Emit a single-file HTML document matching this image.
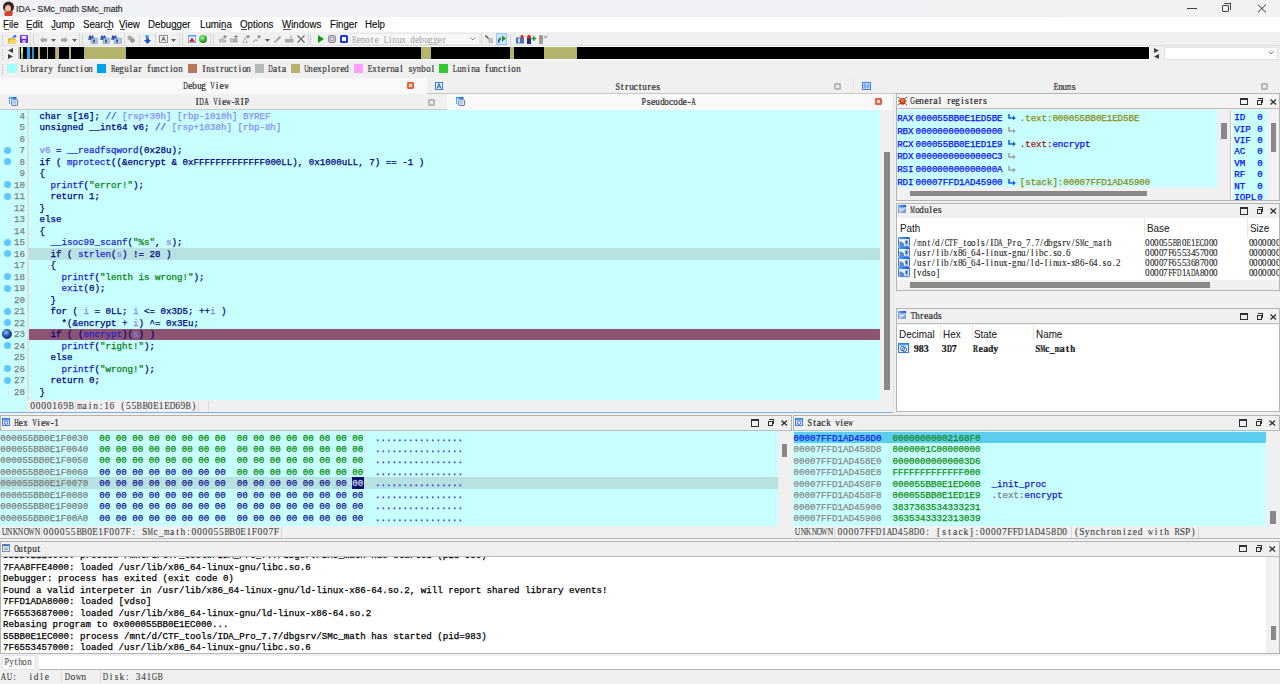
<!DOCTYPE html><html><head><meta charset="utf-8"><style>
*{margin:0;padding:0;box-sizing:border-box}
html,body{width:1280px;height:684px;overflow:hidden;background:#f0f0f0;position:relative}
.a{position:absolute}
.t{position:absolute;white-space:pre;line-height:1}
svg{position:absolute;overflow:visible}
.c{font-family:'Liberation Mono',monospace;-webkit-text-stroke:0.25px currentColor}
.s{font-family:'Liberation Mono',monospace;-webkit-text-stroke:0.2px currentColor}
</style></head><body><div class="a" style="left:0px;top:0px;width:1280px;height:17px;background:linear-gradient(90deg,#eff1f5 0px,#f0f1f4 900px,#f2f2f2 1100px);"></div><svg style="left:2px;top:1px" width="13" height="15" viewBox="0 0 13 15"><ellipse cx="6.5" cy="6" rx="5.5" ry="5.5" fill="#3a2520"/><ellipse cx="6" cy="7.5" rx="3" ry="3.5" fill="#e8c0a8"/><path d="M2 12L6 10L11 11L10 15H3Z" fill="#d84030"/></svg><div class="t" style="left:15.5px;top:4.36px;font-family:'Liberation Sans', sans-serif;font-size:9.5px;color:#282828;-webkit-text-stroke:0.15px #282828;transform:scaleX(0.91);transform-origin:0 0;">IDA - SMc_math SMc_math</div><div class="a" style="left:1187px;top:8px;width:10px;height:1px;background:#404040;"></div><div class="a" style="left:1222px;top:5px;width:7px;height:7px;background:transparent;border:1px solid #404040;border-radius:1px"></div><div class="a" style="left:1224px;top:3px;width:7px;height:7px;background:transparent;border-top:1px solid #404040;border-right:1px solid #404040;border-radius:1px"></div><svg style="left:1257px;top:4px" width="10" height="9" viewBox="0 0 10 9"><path d="M0.8 0.5L9 8.5M9 0.5L0.8 8.5" stroke="#303030" stroke-width="1"/></svg><div class="a" style="left:0px;top:17px;width:1280px;height:15px;background:#ffffff;"></div><div class="t" style="left:3.2046px;top:19.53px;font-family:'Liberation Sans', sans-serif;font-size:10px;color:#101010;-webkit-text-stroke:0.15px #101010;transform:scaleX(0.97);transform-origin:0 0;">File</div><div class="t" style="left:26.104599999999998px;top:19.53px;font-family:'Liberation Sans', sans-serif;font-size:10px;color:#101010;-webkit-text-stroke:0.15px #101010;transform:scaleX(0.97);transform-origin:0 0;">Edit</div><div class="t" style="left:51.4448px;top:19.53px;font-family:'Liberation Sans', sans-serif;font-size:10px;color:#101010;-webkit-text-stroke:0.15px #101010;transform:scaleX(0.97);transform-origin:0 0;">Jump</div><div class="t" style="left:83.1635px;top:19.53px;font-family:'Liberation Sans', sans-serif;font-size:10px;color:#101010;-webkit-text-stroke:0.15px #101010;transform:scaleX(0.97);transform-origin:0 0;">Search</div><div class="t" style="left:119.4612px;top:19.53px;font-family:'Liberation Sans', sans-serif;font-size:10px;color:#101010;-webkit-text-stroke:0.15px #101010;transform:scaleX(0.97);transform-origin:0 0;">View</div><div class="t" style="left:147.6046px;top:19.53px;font-family:'Liberation Sans', sans-serif;font-size:10px;color:#101010;-webkit-text-stroke:0.15px #101010;transform:scaleX(0.97);transform-origin:0 0;">Debugger</div><div class="t" style="left:199.8046px;top:19.53px;font-family:'Liberation Sans', sans-serif;font-size:10px;color:#101010;-webkit-text-stroke:0.15px #101010;transform:scaleX(0.97);transform-origin:0 0;">Lumina</div><div class="t" style="left:239.5441px;top:19.53px;font-family:'Liberation Sans', sans-serif;font-size:10px;color:#101010;-webkit-text-stroke:0.15px #101010;transform:scaleX(0.97);transform-origin:0 0;">Options</div><div class="t" style="left:282.1612px;top:19.53px;font-family:'Liberation Sans', sans-serif;font-size:10px;color:#101010;-webkit-text-stroke:0.15px #101010;transform:scaleX(0.97);transform-origin:0 0;">Windows</div><div class="t" style="left:329.50460000000004px;top:19.53px;font-family:'Liberation Sans', sans-serif;font-size:10px;color:#101010;-webkit-text-stroke:0.15px #101010;transform:scaleX(0.97);transform-origin:0 0;">Finger</div><div class="t" style="left:365.00460000000004px;top:19.53px;font-family:'Liberation Sans', sans-serif;font-size:10px;color:#101010;-webkit-text-stroke:0.15px #101010;transform:scaleX(0.97);transform-origin:0 0;">Help</div><div class="a" style="left:4.2px;top:28.8px;width:4.5px;height:0.8px;background:#505050;"></div><div class="a" style="left:27.3px;top:28.8px;width:5px;height:0.8px;background:#505050;"></div><div class="a" style="left:52px;top:28.8px;width:4px;height:0.8px;background:#505050;"></div><div class="a" style="left:106.5px;top:28.8px;width:5px;height:0.8px;background:#505050;"></div><div class="a" style="left:119.8px;top:28.8px;width:5.5px;height:0.8px;background:#505050;"></div><div class="a" style="left:175px;top:28.8px;width:5px;height:0.8px;background:#505050;"></div><div class="a" style="left:221px;top:28.8px;width:5px;height:0.8px;background:#505050;"></div><div class="a" style="left:240.5px;top:28.8px;width:6.5px;height:0.8px;background:#505050;"></div><div class="a" style="left:282.5px;top:28.8px;width:8px;height:0.8px;background:#505050;"></div><div class="a" style="left:0px;top:32px;width:1280px;height:14px;background:#f0f0f0;border-bottom:1px solid #dedede"></div><div class="a" style="left:2px;top:35px;width:1px;height:1px;background:#b8b8b8;"></div><div class="a" style="left:2px;top:37px;width:1px;height:1px;background:#b8b8b8;"></div><div class="a" style="left:2px;top:39px;width:1px;height:1px;background:#b8b8b8;"></div><div class="a" style="left:2px;top:41px;width:1px;height:1px;background:#b8b8b8;"></div><div class="a" style="left:2px;top:43px;width:1px;height:1px;background:#b8b8b8;"></div><svg style="left:8px;top:34.5px" width="9" height="9" viewBox="0 0 9 9"><path d="M0 3H3.2L4 4H8V8.5H0Z" fill="#e8b820"/><path d="M0.5 8.5L1.8 5H9L7.8 8.5Z" fill="#f8d860"/><path d="M4.5 3.2L7.6 0.6M7.6 0.6L5.8 0.6M7.6 0.6V2.4" stroke="#2068e0" stroke-width="1.2" fill="none"/></svg><svg style="left:20px;top:34.5px" width="8" height="8" viewBox="0 0 8 8"><rect x="0" y="0" width="8" height="8" rx="0.8" fill="#7028d0"/><rect x="1.6" y="0.8" width="4.8" height="3" fill="#f0e8ff"/><rect x="2.4" y="5" width="3.2" height="3" fill="#c8b8f0"/></svg><div class="a" style="left:30px;top:33px;width:1px;height:12px;background:#dadada;"></div><div class="a" style="left:33px;top:35px;width:1px;height:1px;background:#b8b8b8;"></div><div class="a" style="left:33px;top:37px;width:1px;height:1px;background:#b8b8b8;"></div><div class="a" style="left:33px;top:39px;width:1px;height:1px;background:#b8b8b8;"></div><div class="a" style="left:33px;top:41px;width:1px;height:1px;background:#b8b8b8;"></div><div class="a" style="left:33px;top:43px;width:1px;height:1px;background:#b8b8b8;"></div><svg style="left:40px;top:36.5px" width="7" height="6" viewBox="0 0 7 6"><path d="M0 3L3.2 0V1.6H7V4.4H3.2V6Z" fill="#a4a4a4"/></svg><svg style="left:51px;top:39px" width="5" height="3" viewBox="0 0 5 3"><path d="M0 0H5L2.5 3Z" fill="#606060"/></svg><svg style="left:61px;top:36.5px" width="7" height="6" viewBox="0 0 7 6"><path d="M7 3L3.8 0V1.6H0V4.4H3.8V6Z" fill="#a4a4a4"/></svg><svg style="left:72px;top:39px" width="5" height="3" viewBox="0 0 5 3"><path d="M0 0H5L2.5 3Z" fill="#606060"/></svg><div class="a" style="left:79px;top:33px;width:1px;height:12px;background:#dadada;"></div><div class="a" style="left:82px;top:35px;width:1px;height:1px;background:#b8b8b8;"></div><div class="a" style="left:82px;top:37px;width:1px;height:1px;background:#b8b8b8;"></div><div class="a" style="left:82px;top:39px;width:1px;height:1px;background:#b8b8b8;"></div><div class="a" style="left:82px;top:41px;width:1px;height:1px;background:#b8b8b8;"></div><div class="a" style="left:82px;top:43px;width:1px;height:1px;background:#b8b8b8;"></div><svg style="left:88px;top:34.8px" width="10" height="9" viewBox="0 0 10 9"><path d="M0.3 4.6L1.2 0.4H2.6L2.9 1.8H3.5L3.8 0.4H5.2L6 4.6V5.1H0.3Z" fill="#2444b8"/><circle cx="1.2" cy="4" r="0.7" fill="#60b0ff"/><rect x="3.2" y="3.3" width="6" height="5" fill="#b8cce4" stroke="#7090c0" stroke-width="0.7"/><rect x="5" y="4.5" width="2" height="3" fill="#3060a0"/></svg><svg style="left:100px;top:34.8px" width="10" height="9" viewBox="0 0 10 9"><path d="M0.3 4.6L1.2 0.4H2.6L2.9 1.8H3.5L3.8 0.4H5.2L6 4.6V5.1H0.3Z" fill="#2444b8"/><circle cx="1.2" cy="4" r="0.7" fill="#60b0ff"/><rect x="3.2" y="3.3" width="6" height="5" fill="#b8cce4" stroke="#7090c0" stroke-width="0.7"/><rect x="5" y="4.5" width="2" height="3" fill="#3060a0"/></svg><svg style="left:111.2px;top:34.8px" width="10" height="9" viewBox="0 0 10 9"><path d="M0.3 4.6L1.2 0.4H2.6L2.9 1.8H3.5L3.8 0.4H5.2L6 4.6V5.1H0.3Z" fill="#2444b8"/><circle cx="1.2" cy="4" r="0.7" fill="#60b0ff"/><rect x="3.2" y="3.3" width="7" height="5" fill="#b8cce4" stroke="#7090c0" stroke-width="0.7"/><rect x="5" y="4.5" width="2" height="3" fill="#3060a0"/></svg><div class="a" style="left:124px;top:33px;width:1px;height:12px;background:#dadada;"></div><svg style="left:127px;top:35px" width="8" height="8" viewBox="0 0 8 8"><circle cx="2.8" cy="2.8" r="2.4" fill="#a8a8a8"/><circle cx="5.4" cy="5.4" r="2.4" fill="#989898"/></svg><div class="a" style="left:139px;top:33px;width:1px;height:12px;background:#dadada;"></div><svg style="left:144px;top:34.5px" width="7" height="9" viewBox="0 0 7 9"><path d="M1.5 0H3.3Q5 0 5 2.2V5H7L3.6 9L0 5H2.2V2Q2.2 1.5 1.5 1.5Z" fill="#1050e8"/><path d="M1.5 0H3.3Q5 0 5 2.2V3.5H3V2Q3 1 1.5 1Z" fill="#40c0ff"/></svg><div class="a" style="left:155px;top:33px;width:1px;height:12px;background:#dadada;"></div><svg style="left:159px;top:35px" width="9" height="8" viewBox="0 0 9 8"><rect x="0.5" y="0.5" width="8" height="7" fill="#f4f4f4" stroke="#909090"/><path d="M2.5 6.2L4.5 1.8L6.5 6.2M3.3 4.6H5.7" stroke="#505050" fill="none" stroke-width="0.9"/></svg><svg style="left:171px;top:39px" width="5" height="3" viewBox="0 0 5 3"><path d="M0 0H5L2.5 3Z" fill="#606060"/></svg><div class="a" style="left:179px;top:33px;width:1px;height:12px;background:#dadada;"></div><div class="a" style="left:182px;top:35px;width:1px;height:1px;background:#b8b8b8;"></div><div class="a" style="left:182px;top:37px;width:1px;height:1px;background:#b8b8b8;"></div><div class="a" style="left:182px;top:39px;width:1px;height:1px;background:#b8b8b8;"></div><div class="a" style="left:182px;top:41px;width:1px;height:1px;background:#b8b8b8;"></div><div class="a" style="left:182px;top:43px;width:1px;height:1px;background:#b8b8b8;"></div><svg style="left:188px;top:35px" width="8" height="8" viewBox="0 0 8 8"><rect x="0" y="0" width="8" height="8" fill="#5aa0f0"/><rect x="0.8" y="1.6" width="6.4" height="5.6" fill="#f4f8ff"/><path d="M4 2.4L7 6.8H1Z" fill="#e01818"/></svg><svg style="left:199px;top:34.5px" width="8" height="8" viewBox="0 0 8 8"><defs><radialGradient id="gball" cx="0.4" cy="0.35" r="0.6"><stop offset="0" stop-color="#a0ffa0"/><stop offset="1" stop-color="#109010"/></radialGradient></defs><circle cx="4" cy="4" r="3.9" fill="url(#gball)"/></svg><div class="a" style="left:210px;top:33px;width:1px;height:12px;background:#dadada;"></div><div class="a" style="left:213px;top:35px;width:1px;height:1px;background:#b8b8b8;"></div><div class="a" style="left:213px;top:37px;width:1px;height:1px;background:#b8b8b8;"></div><div class="a" style="left:213px;top:39px;width:1px;height:1px;background:#b8b8b8;"></div><div class="a" style="left:213px;top:41px;width:1px;height:1px;background:#b8b8b8;"></div><div class="a" style="left:213px;top:43px;width:1px;height:1px;background:#b8b8b8;"></div><svg style="left:219px;top:35px" width="9" height="8" viewBox="0 0 9 8"><path d="M0.5 7.5V4H2V7.5M2.8 7.5V3H4.3V7.5M5 7.5V5H7V7.5" fill="#b8b8b8" stroke="#b0b0b0" stroke-width="0.5"/><path d="M6 0V3.4M4.3 1.7H7.7" stroke="#8a8a8a" stroke-width="1.3"/></svg><svg style="left:230px;top:35px" width="9" height="8" viewBox="0 0 9 8"><rect x="0" y="3.5" width="7.5" height="4" fill="#a8a8a8"/><rect x="1" y="4.5" width="2" height="2" fill="#d8d8d8"/><path d="M6 0V3.4M4.3 1.7H7.7" stroke="#8a8a8a" stroke-width="1.3"/></svg><svg style="left:241.6px;top:35px" width="9" height="8" viewBox="0 0 9 8"><path d="M0.5 7.5L3 2.5L5.5 7.5Z" fill="none" stroke="#b8b8b8" stroke-width="1"/><path d="M6 0V3.4M4.3 1.7H7.7" stroke="#8a8a8a" stroke-width="1.3"/></svg><svg style="left:253.4px;top:35px" width="9" height="8" viewBox="0 0 9 8"><path d="M0 7L3 4.5L4.5 6" stroke="#b0b0b0" stroke-width="1.2" fill="none"/><path d="M6 0V3.4M4.3 1.7H7.7" stroke="#8a8a8a" stroke-width="1.3"/></svg><svg style="left:265px;top:39px" width="5" height="3" viewBox="0 0 5 3"><path d="M0 0H5L2.5 3Z" fill="#606060"/></svg><svg style="left:273.7px;top:35px" width="9" height="8" viewBox="0 0 9 8"><path d="M0.5 7.5L6.5 1.5" stroke="#a8a8a8" stroke-width="2.2"/><path d="M1 5L3 7" stroke="#c8c8c8" stroke-width="0.8"/></svg><svg style="left:285px;top:35px" width="9" height="8" viewBox="0 0 9 8"><rect x="0" y="4" width="8.5" height="3.5" fill="#a8a8a8"/><path d="M6 4V0.5" stroke="#a8a8a8" stroke-width="1.2"/></svg><svg style="left:297px;top:35px" width="8" height="8" viewBox="0 0 8 8"><path d="M0.5 0.5L7.5 7.5M7.5 0.5L0.5 7.5" stroke="#6a6a6a" stroke-width="1.1"/></svg><div class="a" style="left:307.7px;top:33px;width:1px;height:12px;background:#dadada;"></div><div class="a" style="left:310px;top:35px;width:1px;height:1px;background:#b8b8b8;"></div><div class="a" style="left:310px;top:37px;width:1px;height:1px;background:#b8b8b8;"></div><div class="a" style="left:310px;top:39px;width:1px;height:1px;background:#b8b8b8;"></div><div class="a" style="left:310px;top:41px;width:1px;height:1px;background:#b8b8b8;"></div><div class="a" style="left:310px;top:43px;width:1px;height:1px;background:#b8b8b8;"></div><svg style="left:318px;top:35px" width="6" height="8" viewBox="0 0 6 8"><path d="M0 0L6 4L0 8Z" fill="#109a10"/></svg><svg style="left:328px;top:35px" width="8" height="8" viewBox="0 0 8 8"><rect x="0.5" y="0.5" width="7" height="7" rx="1.5" fill="#c8c8c8" stroke="#909090"/><rect x="2.5" y="2.5" width="3" height="3" fill="#e0e0e0" stroke="#909090" stroke-width="0.6"/></svg><svg style="left:340px;top:35px" width="8" height="8" viewBox="0 0 8 8"><rect x="0" y="0" width="8" height="8" rx="1.5" fill="#1838d8"/><rect x="2" y="2" width="4" height="4" fill="#ffffff"/></svg><div class="a" style="left:350px;top:33px;width:130px;height:12px;background:#f7f7f7;border:1px solid #e8e8e8"></div><div class="t" style="left:352px;top:34.62px;font-family:'Liberation Serif',serif;font-size:10px;color:#a0a0a0;-webkit-text-stroke:0.22px #a0a0a0;-webkit-text-stroke:0"><span style="position:absolute;left:-1.08px;top:0;transform:scaleX(0.675);transform-origin:3.33px 0">R</span><span style="position:absolute;left:4.53px;top:0;transform:scaleX(1.000);transform-origin:2.22px 0">e</span><span style="position:absolute;left:7.36px;top:0;transform:scaleX(0.579);transform-origin:3.89px 0">m</span><span style="position:absolute;left:13.25px;top:0;transform:scaleX(0.900);transform-origin:2.50px 0">o</span><span style="position:absolute;left:18.86px;top:0;transform:scaleX(1.000);transform-origin:1.39px 0">t</span><span style="position:absolute;left:22.53px;top:0;transform:scaleX(1.000);transform-origin:2.22px 0">e</span><span style="position:absolute;left:30.70px;top:0;transform:scaleX(0.737);transform-origin:3.05px 0">L</span><span style="position:absolute;left:36.86px;top:0;transform:scaleX(1.000);transform-origin:1.39px 0">i</span><span style="position:absolute;left:40.25px;top:0;transform:scaleX(0.900);transform-origin:2.50px 0">n</span><span style="position:absolute;left:44.75px;top:0;transform:scaleX(0.900);transform-origin:2.50px 0">u</span><span style="position:absolute;left:49.25px;top:0;transform:scaleX(0.900);transform-origin:2.50px 0">x</span><span style="position:absolute;left:58.25px;top:0;transform:scaleX(0.900);transform-origin:2.50px 0">d</span><span style="position:absolute;left:63.03px;top:0;transform:scaleX(1.000);transform-origin:2.22px 0">e</span><span style="position:absolute;left:67.25px;top:0;transform:scaleX(0.900);transform-origin:2.50px 0">b</span><span style="position:absolute;left:71.75px;top:0;transform:scaleX(0.900);transform-origin:2.50px 0">u</span><span style="position:absolute;left:76.25px;top:0;transform:scaleX(0.900);transform-origin:2.50px 0">g</span><span style="position:absolute;left:80.75px;top:0;transform:scaleX(0.900);transform-origin:2.50px 0">g</span><span style="position:absolute;left:85.53px;top:0;transform:scaleX(1.000);transform-origin:2.22px 0">e</span><span style="position:absolute;left:90.58px;top:0;transform:scaleX(1.000);transform-origin:1.67px 0">r</span></div><svg style="left:470px;top:37px" width="6" height="4" viewBox="0 0 6 4"><path d="M0.5 0.5L3 3L5.5 0.5" stroke="#909090" fill="none"/></svg><div class="a" style="left:481px;top:33px;width:1px;height:12px;background:#dadada;"></div><svg style="left:485px;top:35px" width="8" height="8" viewBox="0 0 8 8"><path d="M0.5 0.5L4 4" stroke="#505050" stroke-width="1.3"/><rect x="3.5" y="3" width="4.5" height="5" fill="#c0c0c0"/><path d="M0 2L2 0" stroke="#909090"/></svg><div class="a" style="left:496px;top:33px;width:11px;height:12px;background:#cce4f7;border:1px solid #99c8ee"></div><svg style="left:498px;top:35px" width="8" height="8" viewBox="0 0 8 8"><path d="M4 0.5L8 3.5L4 6.5Z" fill="#10a010"/><path d="M1 7.5Q0 4 3 3.5" stroke="#2040a0" stroke-width="1.5" fill="none"/></svg><div class="a" style="left:510px;top:35px;width:1px;height:1px;background:#b8b8b8;"></div><div class="a" style="left:510px;top:37px;width:1px;height:1px;background:#b8b8b8;"></div><div class="a" style="left:510px;top:39px;width:1px;height:1px;background:#b8b8b8;"></div><div class="a" style="left:510px;top:41px;width:1px;height:1px;background:#b8b8b8;"></div><div class="a" style="left:510px;top:43px;width:1px;height:1px;background:#b8b8b8;"></div><svg style="left:516px;top:35px" width="9" height="9" viewBox="0 0 9 9"><rect x="0" y="2.5" width="8" height="6" fill="#4070c0"/><rect x="2" y="3.5" width="2" height="4" fill="#e0e8ff"/><path d="M6 0.5V4" stroke="#e02020" stroke-width="1.5"/><circle cx="6" cy="1.5" r="1.6" fill="#e02020"/></svg><svg style="left:527px;top:35px" width="9" height="9" viewBox="0 0 9 9"><rect x="0" y="3" width="4" height="6" fill="#203080"/><circle cx="2" cy="2" r="2" fill="#e02020"/><path d="M4.5 3.5H9M6.8 1.3V5.7" stroke="#10a010" stroke-width="1.5"/></svg><svg style="left:539px;top:35px" width="9" height="9" viewBox="0 0 9 9"><rect x="0" y="3" width="4" height="6" fill="#a0a0a0"/><circle cx="2" cy="2" r="2" fill="#909090"/><path d="M5 0.5L8 3.5M8 0.5L5 3.5" stroke="#909090"/></svg><div class="a" style="left:2px;top:49px;width:1px;height:1px;background:#b8b8b8;"></div><div class="a" style="left:2px;top:51px;width:1px;height:1px;background:#b8b8b8;"></div><div class="a" style="left:2px;top:53px;width:1px;height:1px;background:#b8b8b8;"></div><div class="a" style="left:2px;top:55px;width:1px;height:1px;background:#b8b8b8;"></div><div class="a" style="left:2px;top:57px;width:1px;height:1px;background:#b8b8b8;"></div><div class="a" style="left:2px;top:59px;width:1px;height:1px;background:#b8b8b8;"></div><svg style="left:8px;top:48px" width="5" height="5" viewBox="0 0 5 5"><path d="M5 0V5L0 2.5Z" fill="#404040"/></svg><svg style="left:8px;top:54px" width="5" height="5" viewBox="0 0 5 5"><path d="M0 0V5L5 2.5Z" fill="#404040"/></svg><div class="a" style="left:17.2px;top:46.3px;width:1133.3px;height:14.2px;background:#ffffff;"></div><div class="a" style="left:18.2px;top:47.3px;width:1131.3px;height:12.2px;background:#000;"></div><div class="a" style="left:18.2px;top:47.3px;width:2.3px;height:12.2px;background:#b8b8b8;"></div><div class="a" style="left:20.5px;top:47.3px;width:2.5px;height:12.2px;background:#b4b46c;"></div><div class="a" style="left:26.5px;top:47.3px;width:3.3px;height:12.2px;background:#18b0f8;"></div><div class="a" style="left:32.3px;top:47.3px;width:1.7px;height:12.2px;background:#3890c0;"></div><div class="a" style="left:38px;top:47.3px;width:2px;height:12.2px;background:#b4b46c;"></div><div class="a" style="left:47px;top:47.3px;width:1px;height:12.2px;background:#b4b46c;"></div><div class="a" style="left:54.5px;top:47.3px;width:1.5px;height:12.2px;background:#909090;"></div><div class="a" style="left:56px;top:47.3px;width:1.8px;height:12.2px;background:#b4b46c;"></div><div class="a" style="left:57.8px;top:47.3px;width:1.5px;height:12.2px;background:#c0a090;"></div><div class="a" style="left:69px;top:47.3px;width:2px;height:12.2px;background:#b4b46c;"></div><div class="a" style="left:84.3px;top:47.3px;width:41.7px;height:12.2px;background:#b4b46c;"></div><div class="a" style="left:420.75px;top:47.3px;width:10.25px;height:12.2px;background:#b4b46c;"></div><div class="a" style="left:510px;top:47.3px;width:4px;height:12.2px;background:#b4b46c;"></div><div class="a" style="left:543.75px;top:47.3px;width:33.25px;height:12.2px;background:#b4b46c;"></div><div class="a" style="left:21.2px;top:48px;width:1.8px;height:5px;background:#f4f450;"></div><svg style="left:1154px;top:48px" width="5" height="5" viewBox="0 0 5 5"><path d="M0 0V5L5 2.5Z" fill="#404040"/></svg><svg style="left:1154px;top:54px" width="5" height="5" viewBox="0 0 5 5"><path d="M5 0V5L0 2.5Z" fill="#404040"/></svg><div class="a" style="left:1164px;top:47px;width:114px;height:13px;background:#fff;border:1px solid #e0e0e0"></div><svg style="left:1268px;top:51px" width="6" height="4" viewBox="0 0 6 4"><path d="M0.5 0.5L3 3L5.5 0.5" stroke="#808080" fill="none"/></svg><div class="a" style="left:2px;top:64px;width:1px;height:1px;background:#b8b8b8;"></div><div class="a" style="left:2px;top:66px;width:1px;height:1px;background:#b8b8b8;"></div><div class="a" style="left:2px;top:68px;width:1px;height:1px;background:#b8b8b8;"></div><div class="a" style="left:2px;top:70px;width:1px;height:1px;background:#b8b8b8;"></div><div class="a" style="left:2px;top:72px;width:1px;height:1px;background:#b8b8b8;"></div><div class="a" style="left:2px;top:74px;width:1px;height:1px;background:#b8b8b8;"></div><div class="a" style="left:7.3px;top:64px;width:9.4px;height:9px;background:#a0ffff;"></div><div class="t" style="left:20.8px;top:63.62px;font-family:'Liberation Serif',serif;font-size:10px;color:#404040;-webkit-text-stroke:0.22px #404040;"><span style="position:absolute;left:-0.80px;top:0;transform:scaleX(0.737);transform-origin:3.05px 0">L</span><span style="position:absolute;left:5.36px;top:0;transform:scaleX(1.000);transform-origin:1.39px 0">i</span><span style="position:absolute;left:8.75px;top:0;transform:scaleX(0.900);transform-origin:2.50px 0">b</span><span style="position:absolute;left:14.08px;top:0;transform:scaleX(1.000);transform-origin:1.67px 0">r</span><span style="position:absolute;left:18.03px;top:0;transform:scaleX(1.000);transform-origin:2.22px 0">a</span><span style="position:absolute;left:23.08px;top:0;transform:scaleX(1.000);transform-origin:1.67px 0">r</span><span style="position:absolute;left:26.75px;top:0;transform:scaleX(0.900);transform-origin:2.50px 0">y</span><span style="position:absolute;left:36.58px;top:0;transform:scaleX(1.000);transform-origin:1.67px 0">f</span><span style="position:absolute;left:40.25px;top:0;transform:scaleX(0.900);transform-origin:2.50px 0">u</span><span style="position:absolute;left:44.75px;top:0;transform:scaleX(0.900);transform-origin:2.50px 0">n</span><span style="position:absolute;left:49.53px;top:0;transform:scaleX(1.000);transform-origin:2.22px 0">c</span><span style="position:absolute;left:54.86px;top:0;transform:scaleX(1.000);transform-origin:1.39px 0">t</span><span style="position:absolute;left:59.36px;top:0;transform:scaleX(1.000);transform-origin:1.39px 0">i</span><span style="position:absolute;left:62.75px;top:0;transform:scaleX(0.900);transform-origin:2.50px 0">o</span><span style="position:absolute;left:67.25px;top:0;transform:scaleX(0.900);transform-origin:2.50px 0">n</span></div><div class="a" style="left:97px;top:64px;width:9.4px;height:9px;background:#00a0f0;"></div><div class="t" style="left:110.7px;top:63.62px;font-family:'Liberation Serif',serif;font-size:10px;color:#404040;-webkit-text-stroke:0.22px #404040;"><span style="position:absolute;left:-1.08px;top:0;transform:scaleX(0.675);transform-origin:3.33px 0">R</span><span style="position:absolute;left:4.53px;top:0;transform:scaleX(1.000);transform-origin:2.22px 0">e</span><span style="position:absolute;left:8.75px;top:0;transform:scaleX(0.900);transform-origin:2.50px 0">g</span><span style="position:absolute;left:13.25px;top:0;transform:scaleX(0.900);transform-origin:2.50px 0">u</span><span style="position:absolute;left:18.86px;top:0;transform:scaleX(1.000);transform-origin:1.39px 0">l</span><span style="position:absolute;left:22.53px;top:0;transform:scaleX(1.000);transform-origin:2.22px 0">a</span><span style="position:absolute;left:27.58px;top:0;transform:scaleX(1.000);transform-origin:1.67px 0">r</span><span style="position:absolute;left:36.58px;top:0;transform:scaleX(1.000);transform-origin:1.67px 0">f</span><span style="position:absolute;left:40.25px;top:0;transform:scaleX(0.900);transform-origin:2.50px 0">u</span><span style="position:absolute;left:44.75px;top:0;transform:scaleX(0.900);transform-origin:2.50px 0">n</span><span style="position:absolute;left:49.53px;top:0;transform:scaleX(1.000);transform-origin:2.22px 0">c</span><span style="position:absolute;left:54.86px;top:0;transform:scaleX(1.000);transform-origin:1.39px 0">t</span><span style="position:absolute;left:59.36px;top:0;transform:scaleX(1.000);transform-origin:1.39px 0">i</span><span style="position:absolute;left:62.75px;top:0;transform:scaleX(0.900);transform-origin:2.50px 0">o</span><span style="position:absolute;left:67.25px;top:0;transform:scaleX(0.900);transform-origin:2.50px 0">n</span></div><div class="a" style="left:187.5px;top:64px;width:9.4px;height:9px;background:#b87858;"></div><div class="t" style="left:201.6px;top:63.62px;font-family:'Liberation Serif',serif;font-size:10px;color:#404040;-webkit-text-stroke:0.22px #404040;"><span style="position:absolute;left:0.58px;top:0;transform:scaleX(1.000);transform-origin:1.67px 0">I</span><span style="position:absolute;left:4.25px;top:0;transform:scaleX(0.900);transform-origin:2.50px 0">n</span><span style="position:absolute;left:9.30px;top:0;transform:scaleX(1.000);transform-origin:1.95px 0">s</span><span style="position:absolute;left:14.36px;top:0;transform:scaleX(1.000);transform-origin:1.39px 0">t</span><span style="position:absolute;left:18.58px;top:0;transform:scaleX(1.000);transform-origin:1.67px 0">r</span><span style="position:absolute;left:22.25px;top:0;transform:scaleX(0.900);transform-origin:2.50px 0">u</span><span style="position:absolute;left:27.03px;top:0;transform:scaleX(1.000);transform-origin:2.22px 0">c</span><span style="position:absolute;left:32.36px;top:0;transform:scaleX(1.000);transform-origin:1.39px 0">t</span><span style="position:absolute;left:36.86px;top:0;transform:scaleX(1.000);transform-origin:1.39px 0">i</span><span style="position:absolute;left:40.25px;top:0;transform:scaleX(0.900);transform-origin:2.50px 0">o</span><span style="position:absolute;left:44.75px;top:0;transform:scaleX(0.900);transform-origin:2.50px 0">n</span></div><div class="a" style="left:255px;top:64px;width:9.4px;height:9px;background:#b8b8b8;"></div><div class="t" style="left:268.2px;top:63.62px;font-family:'Liberation Serif',serif;font-size:10px;color:#404040;-webkit-text-stroke:0.22px #404040;"><span style="position:absolute;left:-1.36px;top:0;transform:scaleX(0.623);transform-origin:3.61px 0">D</span><span style="position:absolute;left:4.53px;top:0;transform:scaleX(1.000);transform-origin:2.22px 0">a</span><span style="position:absolute;left:9.86px;top:0;transform:scaleX(1.000);transform-origin:1.39px 0">t</span><span style="position:absolute;left:13.53px;top:0;transform:scaleX(1.000);transform-origin:2.22px 0">a</span></div><div class="a" style="left:291px;top:64px;width:9.4px;height:9px;background:#b4b46c;"></div><div class="t" style="left:304.2px;top:63.62px;font-family:'Liberation Serif',serif;font-size:10px;color:#404040;-webkit-text-stroke:0.22px #404040;"><span style="position:absolute;left:-1.36px;top:0;transform:scaleX(0.623);transform-origin:3.61px 0">U</span><span style="position:absolute;left:4.25px;top:0;transform:scaleX(0.900);transform-origin:2.50px 0">n</span><span style="position:absolute;left:9.03px;top:0;transform:scaleX(1.000);transform-origin:2.22px 0">e</span><span style="position:absolute;left:13.25px;top:0;transform:scaleX(0.900);transform-origin:2.50px 0">x</span><span style="position:absolute;left:17.75px;top:0;transform:scaleX(0.900);transform-origin:2.50px 0">p</span><span style="position:absolute;left:23.36px;top:0;transform:scaleX(1.000);transform-origin:1.39px 0">l</span><span style="position:absolute;left:26.75px;top:0;transform:scaleX(0.900);transform-origin:2.50px 0">o</span><span style="position:absolute;left:32.08px;top:0;transform:scaleX(1.000);transform-origin:1.67px 0">r</span><span style="position:absolute;left:36.03px;top:0;transform:scaleX(1.000);transform-origin:2.22px 0">e</span><span style="position:absolute;left:40.25px;top:0;transform:scaleX(0.900);transform-origin:2.50px 0">d</span></div><div class="a" style="left:354px;top:64px;width:9.4px;height:9px;background:#ffa0ff;"></div><div class="t" style="left:367.6px;top:63.62px;font-family:'Liberation Serif',serif;font-size:10px;color:#404040;-webkit-text-stroke:0.22px #404040;"><span style="position:absolute;left:-0.80px;top:0;transform:scaleX(0.737);transform-origin:3.05px 0">E</span><span style="position:absolute;left:4.25px;top:0;transform:scaleX(0.900);transform-origin:2.50px 0">x</span><span style="position:absolute;left:9.86px;top:0;transform:scaleX(1.000);transform-origin:1.39px 0">t</span><span style="position:absolute;left:13.53px;top:0;transform:scaleX(1.000);transform-origin:2.22px 0">e</span><span style="position:absolute;left:18.58px;top:0;transform:scaleX(1.000);transform-origin:1.67px 0">r</span><span style="position:absolute;left:22.25px;top:0;transform:scaleX(0.900);transform-origin:2.50px 0">n</span><span style="position:absolute;left:27.03px;top:0;transform:scaleX(1.000);transform-origin:2.22px 0">a</span><span style="position:absolute;left:32.36px;top:0;transform:scaleX(1.000);transform-origin:1.39px 0">l</span><span style="position:absolute;left:40.80px;top:0;transform:scaleX(1.000);transform-origin:1.95px 0">s</span><span style="position:absolute;left:44.75px;top:0;transform:scaleX(0.900);transform-origin:2.50px 0">y</span><span style="position:absolute;left:47.86px;top:0;transform:scaleX(0.579);transform-origin:3.89px 0">m</span><span style="position:absolute;left:53.75px;top:0;transform:scaleX(0.900);transform-origin:2.50px 0">b</span><span style="position:absolute;left:58.25px;top:0;transform:scaleX(0.900);transform-origin:2.50px 0">o</span><span style="position:absolute;left:63.86px;top:0;transform:scaleX(1.000);transform-origin:1.39px 0">l</span></div><div class="a" style="left:439px;top:64px;width:9.4px;height:9px;background:#30c830;"></div><div class="t" style="left:453px;top:63.62px;font-family:'Liberation Serif',serif;font-size:10px;color:#404040;-webkit-text-stroke:0.22px #404040;"><span style="position:absolute;left:-0.80px;top:0;transform:scaleX(0.737);transform-origin:3.05px 0">L</span><span style="position:absolute;left:4.25px;top:0;transform:scaleX(0.900);transform-origin:2.50px 0">u</span><span style="position:absolute;left:7.36px;top:0;transform:scaleX(0.579);transform-origin:3.89px 0">m</span><span style="position:absolute;left:14.36px;top:0;transform:scaleX(1.000);transform-origin:1.39px 0">i</span><span style="position:absolute;left:17.75px;top:0;transform:scaleX(0.900);transform-origin:2.50px 0">n</span><span style="position:absolute;left:22.53px;top:0;transform:scaleX(1.000);transform-origin:2.22px 0">a</span><span style="position:absolute;left:32.08px;top:0;transform:scaleX(1.000);transform-origin:1.67px 0">f</span><span style="position:absolute;left:35.75px;top:0;transform:scaleX(0.900);transform-origin:2.50px 0">u</span><span style="position:absolute;left:40.25px;top:0;transform:scaleX(0.900);transform-origin:2.50px 0">n</span><span style="position:absolute;left:45.03px;top:0;transform:scaleX(1.000);transform-origin:2.22px 0">c</span><span style="position:absolute;left:50.36px;top:0;transform:scaleX(1.000);transform-origin:1.39px 0">t</span><span style="position:absolute;left:54.86px;top:0;transform:scaleX(1.000);transform-origin:1.39px 0">i</span><span style="position:absolute;left:58.25px;top:0;transform:scaleX(0.900);transform-origin:2.50px 0">o</span><span style="position:absolute;left:62.75px;top:0;transform:scaleX(0.900);transform-origin:2.50px 0">n</span></div><div class="a" style="left:0px;top:78px;width:427px;height:16px;background:#f9f9f9;"></div><div class="a" style="left:427px;top:78px;width:853px;height:16px;background:#f0f0f0;border-bottom:1px solid #c8c8c8"></div><div class="a" style="left:853px;top:78px;width:1px;height:15px;background:#e4e4e4;"></div><div class="t" style="left:183.5px;top:81.12px;font-family:'Liberation Serif',serif;font-size:10px;color:#303030;-webkit-text-stroke:0.22px #303030;"><span style="position:absolute;left:-1.36px;top:0;transform:scaleX(0.623);transform-origin:3.61px 0">D</span><span style="position:absolute;left:4.53px;top:0;transform:scaleX(1.000);transform-origin:2.22px 0">e</span><span style="position:absolute;left:8.75px;top:0;transform:scaleX(0.900);transform-origin:2.50px 0">b</span><span style="position:absolute;left:13.25px;top:0;transform:scaleX(0.900);transform-origin:2.50px 0">u</span><span style="position:absolute;left:17.75px;top:0;transform:scaleX(0.900);transform-origin:2.50px 0">g</span><span style="position:absolute;left:25.64px;top:0;transform:scaleX(0.623);transform-origin:3.61px 0">V</span><span style="position:absolute;left:32.36px;top:0;transform:scaleX(1.000);transform-origin:1.39px 0">i</span><span style="position:absolute;left:36.03px;top:0;transform:scaleX(1.000);transform-origin:2.22px 0">e</span><span style="position:absolute;left:39.14px;top:0;transform:scaleX(0.623);transform-origin:3.61px 0">w</span></div><svg style="left:407px;top:82px" width="7" height="7" viewBox="0 0 7 7"><rect x="0" y="0" width="7" height="7" rx="1.2" fill="#e2603e"/><path d="M2.1 2.1L4.9 4.9M4.9 2.1L2.1 4.9" stroke="#fff" stroke-width="1.1"/></svg><svg style="left:435px;top:82px" width="8" height="8" viewBox="0 0 8 8"><rect x="0.5" y="0.5" width="7" height="7" fill="#e8f0ff" stroke="#3a80e0"/><path d="M2 6.5L4 1.5L6 6.5M2.8 4.8H5.2" stroke="#2050a0" fill="none" stroke-width="0.9"/></svg><div class="t" style="left:615.5px;top:81.72px;font-family:'Liberation Serif',serif;font-size:10px;color:#303030;-webkit-text-stroke:0.22px #303030;"><span style="position:absolute;left:-0.53px;top:0;transform:scaleX(0.809);transform-origin:2.78px 0">S</span><span style="position:absolute;left:5.36px;top:0;transform:scaleX(1.000);transform-origin:1.39px 0">t</span><span style="position:absolute;left:9.58px;top:0;transform:scaleX(1.000);transform-origin:1.67px 0">r</span><span style="position:absolute;left:13.25px;top:0;transform:scaleX(0.900);transform-origin:2.50px 0">u</span><span style="position:absolute;left:18.03px;top:0;transform:scaleX(1.000);transform-origin:2.22px 0">c</span><span style="position:absolute;left:23.36px;top:0;transform:scaleX(1.000);transform-origin:1.39px 0">t</span><span style="position:absolute;left:26.75px;top:0;transform:scaleX(0.900);transform-origin:2.50px 0">u</span><span style="position:absolute;left:32.08px;top:0;transform:scaleX(1.000);transform-origin:1.67px 0">r</span><span style="position:absolute;left:36.03px;top:0;transform:scaleX(1.000);transform-origin:2.22px 0">e</span><span style="position:absolute;left:40.80px;top:0;transform:scaleX(1.000);transform-origin:1.95px 0">s</span></div><svg style="left:834px;top:83px" width="7" height="7" viewBox="0 0 7 7"><rect x="0" y="0" width="7" height="7" rx="1.2" fill="#b8b8b8"/><path d="M2.1 2.1L4.9 4.9M4.9 2.1L2.1 4.9" stroke="#fff" stroke-width="1.1"/></svg><svg style="left:862px;top:82px" width="9" height="8" viewBox="0 0 9 8"><rect x="0.5" y="0.5" width="8" height="7" fill="#e8f0ff" stroke="#3a80e0"/><path d="M3 1V7M6 1V7M1 3H8M1 5H8" stroke="#3a80e0" stroke-width="0.7"/></svg><div class="t" style="left:1053.5px;top:81.72px;font-family:'Liberation Serif',serif;font-size:10px;color:#303030;-webkit-text-stroke:0.22px #303030;"><span style="position:absolute;left:-0.80px;top:0;transform:scaleX(0.737);transform-origin:3.05px 0">E</span><span style="position:absolute;left:4.25px;top:0;transform:scaleX(0.900);transform-origin:2.50px 0">n</span><span style="position:absolute;left:8.75px;top:0;transform:scaleX(0.900);transform-origin:2.50px 0">u</span><span style="position:absolute;left:11.86px;top:0;transform:scaleX(0.579);transform-origin:3.89px 0">m</span><span style="position:absolute;left:18.30px;top:0;transform:scaleX(1.000);transform-origin:1.95px 0">s</span></div><svg style="left:1261px;top:83px" width="7" height="7" viewBox="0 0 7 7"><rect x="0" y="0" width="7" height="7" rx="1.2" fill="#b8b8b8"/><path d="M2.1 2.1L4.9 4.9M4.9 2.1L2.1 4.9" stroke="#fff" stroke-width="1.1"/></svg><div class="a" style="left:0px;top:94px;width:447px;height:16px;background:#f0f0f0;border-bottom:1px solid #c8c8c8"></div><div class="a" style="left:447px;top:94px;width:446px;height:16px;background:#f9f9f9;"></div><svg style="left:9px;top:96.8px" width="9" height="9" viewBox="0 0 9 9"><defs><linearGradient id="tg" x1="0" x2="1"><stop offset="0" stop-color="#30c8ff"/><stop offset="1" stop-color="#2040c8"/></linearGradient></defs><rect x="0" y="0" width="7.5" height="7" fill="#f8fbff"/><rect x="0" y="0" width="7.5" height="1.8" fill="url(#tg)"/><rect x="0" y="0" width="1.1" height="7" fill="#40a8f8"/><rect x="2.7" y="2.7" width="5.8" height="5.8" rx="0.6" fill="#e4eef8" stroke="#4a70b0" stroke-width="0.9"/><path d="M4.2 4.3H7M4.2 5.6H7M4.2 6.9H7" stroke="#8898b8" stroke-width="0.6"/></svg><div class="t" style="left:195px;top:97.12px;font-family:'Liberation Serif',serif;font-size:10px;color:#303030;-webkit-text-stroke:0.22px #303030;"><span style="position:absolute;left:0.58px;top:0;transform:scaleX(1.000);transform-origin:1.67px 0">I</span><span style="position:absolute;left:3.14px;top:0;transform:scaleX(0.623);transform-origin:3.61px 0">D</span><span style="position:absolute;left:7.64px;top:0;transform:scaleX(0.623);transform-origin:3.61px 0">A</span><span style="position:absolute;left:16.64px;top:0;transform:scaleX(0.623);transform-origin:3.61px 0">V</span><span style="position:absolute;left:23.36px;top:0;transform:scaleX(1.000);transform-origin:1.39px 0">i</span><span style="position:absolute;left:27.03px;top:0;transform:scaleX(1.000);transform-origin:2.22px 0">e</span><span style="position:absolute;left:30.14px;top:0;transform:scaleX(0.623);transform-origin:3.61px 0">w</span><span style="position:absolute;left:36.58px;top:0;transform:scaleX(1.000);transform-origin:1.67px 0">-</span><span style="position:absolute;left:39.42px;top:0;transform:scaleX(0.675);transform-origin:3.33px 0">R</span><span style="position:absolute;left:45.58px;top:0;transform:scaleX(1.000);transform-origin:1.67px 0">I</span><span style="position:absolute;left:48.97px;top:0;transform:scaleX(0.809);transform-origin:2.78px 0">P</span></div><svg style="left:428px;top:99px" width="7" height="7" viewBox="0 0 7 7"><rect x="0" y="0" width="7" height="7" rx="1.2" fill="#b8b8b8"/><path d="M2.1 2.1L4.9 4.9M4.9 2.1L2.1 4.9" stroke="#fff" stroke-width="1.1"/></svg><svg style="left:456px;top:96.8px" width="9" height="9" viewBox="0 0 9 9"><defs><linearGradient id="tg" x1="0" x2="1"><stop offset="0" stop-color="#30c8ff"/><stop offset="1" stop-color="#2040c8"/></linearGradient></defs><rect x="0" y="0" width="7.5" height="7" fill="#f8fbff"/><rect x="0" y="0" width="7.5" height="1.8" fill="url(#tg)"/><rect x="0" y="0" width="1.1" height="7" fill="#40a8f8"/><rect x="2.7" y="2.7" width="5.8" height="5.8" rx="0.6" fill="#e4eef8" stroke="#4a70b0" stroke-width="0.9"/><path d="M4.2 4.3H7M4.2 5.6H7M4.2 6.9H7" stroke="#8898b8" stroke-width="0.6"/></svg><div class="t" style="left:642px;top:97.12px;font-family:'Liberation Serif',serif;font-size:10px;color:#303030;-webkit-text-stroke:0.22px #303030;"><span style="position:absolute;left:-0.53px;top:0;transform:scaleX(0.809);transform-origin:2.78px 0">P</span><span style="position:absolute;left:4.80px;top:0;transform:scaleX(1.000);transform-origin:1.95px 0">s</span><span style="position:absolute;left:9.03px;top:0;transform:scaleX(1.000);transform-origin:2.22px 0">e</span><span style="position:absolute;left:13.25px;top:0;transform:scaleX(0.900);transform-origin:2.50px 0">u</span><span style="position:absolute;left:17.75px;top:0;transform:scaleX(0.900);transform-origin:2.50px 0">d</span><span style="position:absolute;left:22.25px;top:0;transform:scaleX(0.900);transform-origin:2.50px 0">o</span><span style="position:absolute;left:27.03px;top:0;transform:scaleX(1.000);transform-origin:2.22px 0">c</span><span style="position:absolute;left:31.25px;top:0;transform:scaleX(0.900);transform-origin:2.50px 0">o</span><span style="position:absolute;left:35.75px;top:0;transform:scaleX(0.900);transform-origin:2.50px 0">d</span><span style="position:absolute;left:40.53px;top:0;transform:scaleX(1.000);transform-origin:2.22px 0">e</span><span style="position:absolute;left:45.58px;top:0;transform:scaleX(1.000);transform-origin:1.67px 0">-</span><span style="position:absolute;left:48.14px;top:0;transform:scaleX(0.623);transform-origin:3.61px 0">A</span></div><svg style="left:875px;top:98px" width="7" height="7" viewBox="0 0 7 7"><rect x="0" y="0" width="7" height="7" rx="1.2" fill="#e2603e"/><path d="M2.1 2.1L4.9 4.9M4.9 2.1L2.1 4.9" stroke="#fff" stroke-width="1.1"/></svg><div class="a" style="left:0px;top:110px;width:880px;height:290px;background:#c8ffff;"></div><div class="a" style="left:27px;top:110px;width:1.6px;height:290px;background:#e6dcdc;"></div><div class="a" style="left:880px;top:110px;width:13px;height:290px;background:#f0f0f0;"></div><div class="a" style="left:884px;top:152px;width:6px;height:238px;background:#888888;"></div><div class="a" style="left:893px;top:94px;width:1px;height:318px;background:#e4e6ec;"></div><div class="t c" style="left:19.5px;top:111.97px;font-size:9.1667px;"><span style="color:#808080">4</span></div><div class="t c" style="left:28.6px;top:111.97px;font-size:9.1667px;"><span style="color:#000080">  char s[16]; </span><span style="color:#4a4ae8">// </span><span style="color:#8c8cff">[rsp+30h] [rbp-1010h] BYREF</span></div><div class="t c" style="left:19.5px;top:123.47px;font-size:9.1667px;"><span style="color:#808080">5</span></div><div class="t c" style="left:28.6px;top:123.47px;font-size:9.1667px;"><span style="color:#000080">  unsigned __int64 v6; </span><span style="color:#4a4ae8">// </span><span style="color:#8c8cff">[rsp+1038h] [rbp-8h]</span></div><div class="t c" style="left:19.5px;top:134.97px;font-size:9.1667px;"><span style="color:#808080">6</span></div><div class="t c" style="left:19.5px;top:146.47px;font-size:9.1667px;"><span style="color:#808080">7</span></div><div class="a" style="left:3.7px;top:146.7px;width:7px;height:7px;background:#5cc8ff;border-radius:50%"></div><div class="t c" style="left:28.6px;top:146.47px;font-size:9.1667px;"><span style="color:#000080">  </span><span style="color:#8484ff">v6</span><span style="color:#000080"> = </span><span style="color:#2424d8">__readfsqword</span><span style="color:#000080">(0x28u);</span></div><div class="t c" style="left:19.5px;top:157.97px;font-size:9.1667px;"><span style="color:#808080">8</span></div><div class="a" style="left:3.7px;top:158.2px;width:7px;height:7px;background:#5cc8ff;border-radius:50%"></div><div class="t c" style="left:28.6px;top:157.97px;font-size:9.1667px;"><span style="color:#000080">  if ( </span><span style="color:#2424d8">mprotect</span><span style="color:#000080">((&amp;encrypt &amp; 0xFFFFFFFFFFFFF000LL), 0x1000uLL, 7) == -1 )</span></div><div class="t c" style="left:19.5px;top:169.47px;font-size:9.1667px;"><span style="color:#808080">9</span></div><div class="t c" style="left:28.6px;top:169.47px;font-size:9.1667px;"><span style="color:#000080">  {</span></div><div class="t c" style="left:14.0px;top:180.97px;font-size:9.1667px;"><span style="color:#808080">10</span></div><div class="a" style="left:3.7px;top:181.2px;width:7px;height:7px;background:#5cc8ff;border-radius:50%"></div><div class="t c" style="left:28.6px;top:180.97px;font-size:9.1667px;"><span style="color:#000080">    </span><span style="color:#2424d8">printf</span><span style="color:#000080">(</span><span style="color:#108010">&quot;error!&quot;</span><span style="color:#000080">);</span></div><div class="t c" style="left:14.0px;top:192.47px;font-size:9.1667px;"><span style="color:#808080">11</span></div><div class="a" style="left:3.7px;top:192.7px;width:7px;height:7px;background:#5cc8ff;border-radius:50%"></div><div class="t c" style="left:28.6px;top:192.47px;font-size:9.1667px;"><span style="color:#000080">    return 1;</span></div><div class="t c" style="left:14.0px;top:203.97px;font-size:9.1667px;"><span style="color:#808080">12</span></div><div class="t c" style="left:28.6px;top:203.97px;font-size:9.1667px;"><span style="color:#000080">  }</span></div><div class="t c" style="left:14.0px;top:215.47px;font-size:9.1667px;"><span style="color:#808080">13</span></div><div class="t c" style="left:28.6px;top:215.47px;font-size:9.1667px;"><span style="color:#000080">  else</span></div><div class="t c" style="left:14.0px;top:226.97px;font-size:9.1667px;"><span style="color:#808080">14</span></div><div class="t c" style="left:28.6px;top:226.97px;font-size:9.1667px;"><span style="color:#000080">  {</span></div><div class="t c" style="left:14.0px;top:238.47px;font-size:9.1667px;"><span style="color:#808080">15</span></div><div class="a" style="left:3.7px;top:238.7px;width:7px;height:7px;background:#5cc8ff;border-radius:50%"></div><div class="t c" style="left:28.6px;top:238.47px;font-size:9.1667px;"><span style="color:#000080">    </span><span style="color:#2424d8">__isoc99_scanf</span><span style="color:#000080">(</span><span style="color:#108010">&quot;%s&quot;</span><span style="color:#000080">, </span><span style="color:#8484ff">s</span><span style="color:#000080">);</span></div><div class="a" style="left:29px;top:248.0px;width:851px;height:11.5px;background:#b8e2e2;"></div><div class="t c" style="left:14.0px;top:249.97px;font-size:9.1667px;"><span style="color:#808080">16</span></div><div class="a" style="left:3.7px;top:250.2px;width:7px;height:7px;background:#5cc8ff;border-radius:50%"></div><div class="t c" style="left:28.6px;top:249.97px;font-size:9.1667px;"><span style="color:#000080">    if ( </span><span style="color:#2424d8">strlen</span><span style="color:#000080">(</span><span style="color:#8484ff">s</span><span style="color:#000080">) != 28 )</span></div><div class="t c" style="left:14.0px;top:261.47px;font-size:9.1667px;"><span style="color:#808080">17</span></div><div class="t c" style="left:28.6px;top:261.47px;font-size:9.1667px;"><span style="color:#000080">    {</span></div><div class="t c" style="left:14.0px;top:272.97px;font-size:9.1667px;"><span style="color:#808080">18</span></div><div class="a" style="left:3.7px;top:273.2px;width:7px;height:7px;background:#5cc8ff;border-radius:50%"></div><div class="t c" style="left:28.6px;top:272.97px;font-size:9.1667px;"><span style="color:#000080">      </span><span style="color:#2424d8">printf</span><span style="color:#000080">(</span><span style="color:#108010">&quot;lenth is wrong!&quot;</span><span style="color:#000080">);</span></div><div class="t c" style="left:14.0px;top:284.47px;font-size:9.1667px;"><span style="color:#808080">19</span></div><div class="a" style="left:3.7px;top:284.7px;width:7px;height:7px;background:#5cc8ff;border-radius:50%"></div><div class="t c" style="left:28.6px;top:284.47px;font-size:9.1667px;"><span style="color:#000080">      </span><span style="color:#2424d8">exit</span><span style="color:#000080">(0);</span></div><div class="t c" style="left:14.0px;top:295.97px;font-size:9.1667px;"><span style="color:#808080">20</span></div><div class="t c" style="left:28.6px;top:295.97px;font-size:9.1667px;"><span style="color:#000080">    }</span></div><div class="t c" style="left:14.0px;top:307.47px;font-size:9.1667px;"><span style="color:#808080">21</span></div><div class="a" style="left:3.7px;top:307.7px;width:7px;height:7px;background:#5cc8ff;border-radius:50%"></div><div class="t c" style="left:28.6px;top:307.47px;font-size:9.1667px;"><span style="color:#000080">    for ( </span><span style="color:#8484ff">i</span><span style="color:#000080"> = 0LL; </span><span style="color:#8484ff">i</span><span style="color:#000080"> &lt;= 0x3D5; ++</span><span style="color:#8484ff">i</span><span style="color:#000080"> )</span></div><div class="t c" style="left:14.0px;top:318.97px;font-size:9.1667px;"><span style="color:#808080">22</span></div><div class="a" style="left:3.7px;top:319.2px;width:7px;height:7px;background:#5cc8ff;border-radius:50%"></div><div class="t c" style="left:28.6px;top:318.97px;font-size:9.1667px;"><span style="color:#000080">      *(&amp;encrypt + </span><span style="color:#8484ff">i</span><span style="color:#000080">) ^= 0x3Eu;</span></div><div class="a" style="left:29px;top:328.5px;width:851px;height:11.5px;background:#8c5470;"></div><div class="t c" style="left:14.0px;top:330.47px;font-size:9.1667px;"><span style="color:#808080">23</span></div><svg style="left:2px;top:329.2px" width="10" height="10" viewBox="0 0 10 10"><defs><radialGradient id="bg23" cx="0.4" cy="0.35" r="0.65"><stop offset="0" stop-color="#90c0ff"/><stop offset="0.6" stop-color="#2858c0"/><stop offset="1" stop-color="#0a2a70"/></radialGradient></defs><circle cx="5" cy="5" r="4.6" fill="url(#bg23)" stroke="#102050" stroke-width="0.6"/></svg><div class="t c" style="left:28.6px;top:330.47px;font-size:9.1667px;"><span style="color:#000080">    if ( (</span><span style="color:#2424d8">encrypt</span><span style="color:#000080">)(</span><span style="color:#8484ff">s</span><span style="color:#000080">) )</span></div><div class="t c" style="left:14.0px;top:341.97px;font-size:9.1667px;"><span style="color:#808080">24</span></div><div class="a" style="left:3.7px;top:342.2px;width:7px;height:7px;background:#5cc8ff;border-radius:50%"></div><div class="t c" style="left:28.6px;top:341.97px;font-size:9.1667px;"><span style="color:#000080">      </span><span style="color:#2424d8">printf</span><span style="color:#000080">(</span><span style="color:#108010">&quot;right!&quot;</span><span style="color:#000080">);</span></div><div class="t c" style="left:14.0px;top:353.47px;font-size:9.1667px;"><span style="color:#808080">25</span></div><div class="t c" style="left:28.6px;top:353.47px;font-size:9.1667px;"><span style="color:#000080">    else</span></div><div class="t c" style="left:14.0px;top:364.97px;font-size:9.1667px;"><span style="color:#808080">26</span></div><div class="a" style="left:3.7px;top:365.2px;width:7px;height:7px;background:#5cc8ff;border-radius:50%"></div><div class="t c" style="left:28.6px;top:364.97px;font-size:9.1667px;"><span style="color:#000080">      </span><span style="color:#2424d8">printf</span><span style="color:#000080">(</span><span style="color:#108010">&quot;wrong!&quot;</span><span style="color:#000080">);</span></div><div class="t c" style="left:14.0px;top:376.47px;font-size:9.1667px;"><span style="color:#808080">27</span></div><div class="a" style="left:3.7px;top:376.7px;width:7px;height:7px;background:#5cc8ff;border-radius:50%"></div><div class="t c" style="left:28.6px;top:376.47px;font-size:9.1667px;"><span style="color:#000080">    return 0;</span></div><div class="t c" style="left:14.0px;top:387.97px;font-size:9.1667px;"><span style="color:#808080">28</span></div><div class="t c" style="left:28.6px;top:387.97px;font-size:9.1667px;"><span style="color:#000080">  }</span></div><div class="a" style="left:0px;top:400px;width:28px;height:12.7px;background:#c8ffff;"></div><div class="a" style="left:28px;top:400px;width:865px;height:12px;background:#f0f0f0;"></div><div class="t" style="left:30px;top:401.54px;font-family:'Liberation Serif',serif;font-size:9.5px;color:#404040;-webkit-text-stroke:0.22px #404040;-webkit-text-stroke:0.1px #404040"><span style="position:absolute;left:0.37px;top:0;transform:scaleX(1.000);transform-origin:2.38px 0">0</span><span style="position:absolute;left:5.86px;top:0;transform:scaleX(1.000);transform-origin:2.38px 0">0</span><span style="position:absolute;left:11.35px;top:0;transform:scaleX(1.000);transform-origin:2.38px 0">0</span><span style="position:absolute;left:16.84px;top:0;transform:scaleX(1.000);transform-origin:2.38px 0">0</span><span style="position:absolute;left:22.33px;top:0;transform:scaleX(1.000);transform-origin:2.38px 0">1</span><span style="position:absolute;left:27.82px;top:0;transform:scaleX(1.000);transform-origin:2.38px 0">6</span><span style="position:absolute;left:33.31px;top:0;transform:scaleX(1.000);transform-origin:2.38px 0">9</span><span style="position:absolute;left:38.01px;top:0;transform:scaleX(0.866);transform-origin:3.17px 0">B</span></div><div class="a" style="left:75px;top:401px;width:1px;height:11px;background:#d8d8d8;"></div><div class="t" style="left:76.5px;top:401.54px;font-family:'Liberation Serif',serif;font-size:9.5px;color:#404040;-webkit-text-stroke:0.22px #404040;-webkit-text-stroke:0.1px #404040"><span style="position:absolute;left:-0.96px;top:0;transform:scaleX(0.739);transform-origin:3.69px 0">m</span><span style="position:absolute;left:6.08px;top:0;transform:scaleX(1.000);transform-origin:2.11px 0">a</span><span style="position:absolute;left:12.33px;top:0;transform:scaleX(1.000);transform-origin:1.32px 0">i</span><span style="position:absolute;left:16.73px;top:0;transform:scaleX(1.000);transform-origin:2.38px 0">n</span><span style="position:absolute;left:23.25px;top:0;transform:scaleX(1.000);transform-origin:1.32px 0">:</span><span style="position:absolute;left:27.66px;top:0;transform:scaleX(1.000);transform-origin:2.38px 0">1</span><span style="position:absolute;left:33.11px;top:0;transform:scaleX(1.000);transform-origin:2.38px 0">6</span><span style="position:absolute;left:44.83px;top:0;transform:scaleX(1.000);transform-origin:1.58px 0">(</span><span style="position:absolute;left:49.49px;top:0;transform:scaleX(1.000);transform-origin:2.38px 0">5</span><span style="position:absolute;left:54.95px;top:0;transform:scaleX(1.000);transform-origin:2.38px 0">5</span><span style="position:absolute;left:59.62px;top:0;transform:scaleX(0.862);transform-origin:3.17px 0">B</span><span style="position:absolute;left:65.08px;top:0;transform:scaleX(0.862);transform-origin:3.17px 0">B</span><span style="position:absolute;left:71.34px;top:0;transform:scaleX(1.000);transform-origin:2.38px 0">0</span><span style="position:absolute;left:76.27px;top:0;transform:scaleX(0.941);transform-origin:2.90px 0">E</span><span style="position:absolute;left:82.26px;top:0;transform:scaleX(1.000);transform-origin:2.38px 0">1</span><span style="position:absolute;left:87.19px;top:0;transform:scaleX(0.941);transform-origin:2.90px 0">E</span><span style="position:absolute;left:92.12px;top:0;transform:scaleX(0.796);transform-origin:3.43px 0">D</span><span style="position:absolute;left:98.64px;top:0;transform:scaleX(1.000);transform-origin:2.38px 0">6</span><span style="position:absolute;left:104.09px;top:0;transform:scaleX(1.000);transform-origin:2.38px 0">9</span><span style="position:absolute;left:108.76px;top:0;transform:scaleX(0.862);transform-origin:3.17px 0">B</span><span style="position:absolute;left:115.81px;top:0;transform:scaleX(1.000);transform-origin:1.58px 0">)</span></div><div class="a" style="left:198px;top:401px;width:1px;height:11px;background:#d8d8d8;"></div><div class="a" style="left:208px;top:401px;width:1px;height:11px;background:#d8d8d8;"></div><div class="a" style="left:28px;top:412px;width:865px;height:1px;background:#80b0e0;"></div><div class="a" style="left:896px;top:93px;width:384px;height:107.5px;background:transparent;border:1px solid #b4b4b4"></div><div class="a" style="left:897px;top:94px;width:382px;height:15px;background:#f4f4f4;border-bottom:1px solid #bcbcbc"></div><svg style="left:898px;top:96.5px" width="9" height="8" viewBox="0 0 9 8"><path d="M0 0L3 2.5M9 0L6 2.5M0 8L3 5.5M9 8L6 5.5M0 4H2M7 4H9" stroke="#303030" stroke-width="0.8"/><ellipse cx="4.5" cy="4.3" rx="3" ry="3.4" fill="#c84010"/><ellipse cx="4.5" cy="3.5" rx="1.8" ry="1.6" fill="#e88040"/></svg><div class="t" style="left:910.7px;top:95.72px;font-family:'Liberation Serif',serif;font-size:10px;color:#303030;-webkit-text-stroke:0.22px #303030;"><span style="position:absolute;left:-1.36px;top:0;transform:scaleX(0.623);transform-origin:3.61px 0">G</span><span style="position:absolute;left:4.53px;top:0;transform:scaleX(1.000);transform-origin:2.22px 0">e</span><span style="position:absolute;left:8.75px;top:0;transform:scaleX(0.900);transform-origin:2.50px 0">n</span><span style="position:absolute;left:13.53px;top:0;transform:scaleX(1.000);transform-origin:2.22px 0">e</span><span style="position:absolute;left:18.58px;top:0;transform:scaleX(1.000);transform-origin:1.67px 0">r</span><span style="position:absolute;left:22.53px;top:0;transform:scaleX(1.000);transform-origin:2.22px 0">a</span><span style="position:absolute;left:27.86px;top:0;transform:scaleX(1.000);transform-origin:1.39px 0">l</span><span style="position:absolute;left:36.58px;top:0;transform:scaleX(1.000);transform-origin:1.67px 0">r</span><span style="position:absolute;left:40.53px;top:0;transform:scaleX(1.000);transform-origin:2.22px 0">e</span><span style="position:absolute;left:44.75px;top:0;transform:scaleX(0.900);transform-origin:2.50px 0">g</span><span style="position:absolute;left:50.36px;top:0;transform:scaleX(1.000);transform-origin:1.39px 0">i</span><span style="position:absolute;left:54.30px;top:0;transform:scaleX(1.000);transform-origin:1.95px 0">s</span><span style="position:absolute;left:59.36px;top:0;transform:scaleX(1.000);transform-origin:1.39px 0">t</span><span style="position:absolute;left:63.03px;top:0;transform:scaleX(1.000);transform-origin:2.22px 0">e</span><span style="position:absolute;left:68.08px;top:0;transform:scaleX(1.000);transform-origin:1.67px 0">r</span><span style="position:absolute;left:72.30px;top:0;transform:scaleX(1.000);transform-origin:1.95px 0">s</span></div><div class="a" style="left:1240px;top:97.5px;width:7.5px;height:7.5px;background:transparent;border:1px solid #303030;border-top-width:2px"></div><div class="a" style="left:1256.5px;top:99.7px;width:5px;height:5px;background:transparent;border:1px solid #303030"></div><div class="a" style="left:1258px;top:97.5px;width:5px;height:5px;background:transparent;border-top:1.6px solid #303030;border-right:1px solid #303030"></div><svg style="left:1270px;top:98.5px" width="6.5" height="6" viewBox="0 0 6.5 6"><path d="M0.5 0.5L6 5.5M6 0.5L0.5 5.5" stroke="#303030" stroke-width="1.3"/></svg><div class="a" style="left:897px;top:109.5px;width:320px;height:77.5px;background:#c8ffff;"></div><div class="a" style="left:1217px;top:109.5px;width:13px;height:77.5px;background:#f0f0f0;"></div><div class="a" style="left:1221px;top:123px;width:5.5px;height:16px;background:#888;"></div><div class="a" style="left:897px;top:187px;width:333px;height:13px;background:#f0f0f0;"></div><div class="a" style="left:909.5px;top:191px;width:237px;height:5px;background:#888;"></div><div class="a" style="left:1230px;top:109.5px;width:1px;height:91px;background:#c8c8c8;"></div><div class="a" style="left:1231px;top:109.5px;width:2px;height:91px;background:#ffffff;"></div><div class="a" style="left:1233px;top:109.5px;width:33.5px;height:90.5px;background:#c8ffff;"></div><div class="a" style="left:1266.5px;top:109.5px;width:12.5px;height:90.5px;background:#f0f0f0;"></div><div class="a" style="left:1270.8px;top:123px;width:5.2px;height:29px;background:#888;"></div><div class="t c" style="left:897.2px;top:113.77px;font-size:9.1667px;letter-spacing:-0.1px"><span style="color:#0a0aff">RAX</span></div><div class="t c" style="left:915.6px;top:113.77px;font-size:9.1667px;letter-spacing:-0.06px"><span style="color:#0a0aff">000055BB0E1ED5BE</span></div><svg style="left:1007.5px;top:114.3px" width="8" height="7" viewBox="0 0 8 7"><path d="M1 0V4H6" stroke="#1860e0" stroke-width="1.6" fill="none"/><path d="M5 1.5L7.8 4L5 6.5Z" fill="#1860e0"/></svg><div class="t c" style="left:1019.8px;top:113.77px;font-size:9.1667px;letter-spacing:-0.06px"><span style="color:#8c8c10">.text:000055BB0E1ED5BE</span></div><div class="t c" style="left:897.2px;top:126.67px;font-size:9.1667px;letter-spacing:-0.1px"><span style="color:#0a0aff">RBX</span></div><div class="t c" style="left:915.6px;top:126.67px;font-size:9.1667px;letter-spacing:-0.06px"><span style="color:#0a0aff">0000000000000000</span></div><svg style="left:1007.5px;top:127.19999999999999px" width="8" height="7" viewBox="0 0 8 7"><path d="M1 0V4H6" stroke="#a0a0a0" stroke-width="1.6" fill="none"/><path d="M5 1.5L7.8 4L5 6.5Z" fill="#a0a0a0"/></svg><div class="t c" style="left:897.2px;top:139.57px;font-size:9.1667px;letter-spacing:-0.1px"><span style="color:#0a0aff">RCX</span></div><div class="t c" style="left:915.6px;top:139.57px;font-size:9.1667px;letter-spacing:-0.06px"><span style="color:#0a0aff">000055BB0E1ED1E9</span></div><svg style="left:1007.5px;top:140.1px" width="8" height="7" viewBox="0 0 8 7"><path d="M1 0V4H6" stroke="#1860e0" stroke-width="1.6" fill="none"/><path d="M5 1.5L7.8 4L5 6.5Z" fill="#1860e0"/></svg><div class="t c" style="left:1019.8px;top:139.57px;font-size:9.1667px;letter-spacing:-0.06px"><span style="color:#a01818">.text:</span><span style="color:#0a0aff">encrypt</span></div><div class="t c" style="left:897.2px;top:152.47px;font-size:9.1667px;letter-spacing:-0.1px"><span style="color:#0a0aff">RDX</span></div><div class="t c" style="left:915.6px;top:152.47px;font-size:9.1667px;letter-spacing:-0.06px"><span style="color:#0a0aff">00000000000000C3</span></div><svg style="left:1007.5px;top:153.0px" width="8" height="7" viewBox="0 0 8 7"><path d="M1 0V4H6" stroke="#a0a0a0" stroke-width="1.6" fill="none"/><path d="M5 1.5L7.8 4L5 6.5Z" fill="#a0a0a0"/></svg><div class="t c" style="left:897.2px;top:165.37px;font-size:9.1667px;letter-spacing:-0.1px"><span style="color:#0a0aff">RSI</span></div><div class="t c" style="left:915.6px;top:165.37px;font-size:9.1667px;letter-spacing:-0.06px"><span style="color:#0a0aff">000000000000000A</span></div><svg style="left:1007.5px;top:165.9px" width="8" height="7" viewBox="0 0 8 7"><path d="M1 0V4H6" stroke="#a0a0a0" stroke-width="1.6" fill="none"/><path d="M5 1.5L7.8 4L5 6.5Z" fill="#a0a0a0"/></svg><div class="t c" style="left:897.2px;top:178.27px;font-size:9.1667px;letter-spacing:-0.1px"><span style="color:#0a0aff">RDI</span></div><div class="t c" style="left:915.6px;top:178.27px;font-size:9.1667px;letter-spacing:-0.06px"><span style="color:#0a0aff">00007FFD1AD45900</span></div><svg style="left:1007.5px;top:178.8px" width="8" height="7" viewBox="0 0 8 7"><path d="M1 0V4H6" stroke="#1860e0" stroke-width="1.6" fill="none"/><path d="M5 1.5L7.8 4L5 6.5Z" fill="#1860e0"/></svg><div class="t c" style="left:1019.8px;top:178.27px;font-size:9.1667px;letter-spacing:-0.06px"><span style="color:#8c8c10">[stack]:00007FFD1AD45900</span></div><div class="t c" style="left:1234.2px;top:113.07px;font-size:9.1667px;"><span style="color:#0a0aff">ID</span></div><div class="t c" style="left:1257.2px;top:113.07px;font-size:9.1667px;"><span style="color:#0a0aff">0</span></div><div class="t c" style="left:1234.2px;top:124.52px;font-size:9.1667px;"><span style="color:#0a0aff">VIP</span></div><div class="t c" style="left:1257.2px;top:124.52px;font-size:9.1667px;"><span style="color:#0a0aff">0</span></div><div class="t c" style="left:1234.2px;top:135.97px;font-size:9.1667px;"><span style="color:#0a0aff">VIF</span></div><div class="t c" style="left:1257.2px;top:135.97px;font-size:9.1667px;"><span style="color:#0a0aff">0</span></div><div class="t c" style="left:1234.2px;top:147.42px;font-size:9.1667px;"><span style="color:#0a0aff">AC</span></div><div class="t c" style="left:1257.2px;top:147.42px;font-size:9.1667px;"><span style="color:#0a0aff">0</span></div><div class="t c" style="left:1234.2px;top:158.87px;font-size:9.1667px;"><span style="color:#0a0aff">VM</span></div><div class="t c" style="left:1257.2px;top:158.87px;font-size:9.1667px;"><span style="color:#0a0aff">0</span></div><div class="t c" style="left:1234.2px;top:170.32px;font-size:9.1667px;"><span style="color:#0a0aff">RF</span></div><div class="t c" style="left:1257.2px;top:170.32px;font-size:9.1667px;"><span style="color:#0a0aff">0</span></div><div class="t c" style="left:1234.2px;top:181.77px;font-size:9.1667px;"><span style="color:#0a0aff">NT</span></div><div class="t c" style="left:1257.2px;top:181.77px;font-size:9.1667px;"><span style="color:#0a0aff">0</span></div><div class="t c" style="left:1234.2px;top:193.22px;font-size:9.1667px;"><span style="color:#0a0aff">IOPL</span></div><div class="t c" style="left:1257.2px;top:193.22px;font-size:9.1667px;"><span style="color:#0a0aff">0</span></div><div class="a" style="left:1233px;top:200px;width:47px;height:2.5px;background:#f0f0f0;"></div><div class="a" style="left:896px;top:200.5px;width:384px;height:2px;background:#f0f0f0;"></div><div class="a" style="left:896px;top:200px;width:384px;height:1px;background:#b4b4b4;"></div><div class="a" style="left:896px;top:202.5px;width:384px;height:88.80000000000001px;background:transparent;border:1px solid #b4b4b4"></div><div class="a" style="left:897px;top:203.5px;width:382px;height:15px;background:#f0f0f0;border-bottom:1px solid #bcbcbc"></div><svg style="left:898px;top:205.4px" width="8" height="8" viewBox="0 0 8 8"><rect x="0" y="0" width="8" height="8" fill="#7ea4d8"/><rect x="0" y="0" width="8" height="1.8" fill="url(#tg)"/><path d="M1.2 2.8L4 5.5L6.8 2.8" stroke="#f4f8ff" stroke-width="1.2" fill="none"/><rect x="1" y="5" width="2.5" height="2.5" fill="#b8d0f0"/></svg><div class="t" style="left:910.4px;top:205.12px;font-family:'Liberation Serif',serif;font-size:10px;color:#303030;-webkit-text-stroke:0.22px #303030;"><span style="position:absolute;left:-2.20px;top:0;transform:scaleX(0.506);transform-origin:4.45px 0">M</span><span style="position:absolute;left:4.25px;top:0;transform:scaleX(0.900);transform-origin:2.50px 0">o</span><span style="position:absolute;left:8.75px;top:0;transform:scaleX(0.900);transform-origin:2.50px 0">d</span><span style="position:absolute;left:13.25px;top:0;transform:scaleX(0.900);transform-origin:2.50px 0">u</span><span style="position:absolute;left:18.86px;top:0;transform:scaleX(1.000);transform-origin:1.39px 0">l</span><span style="position:absolute;left:22.53px;top:0;transform:scaleX(1.000);transform-origin:2.22px 0">e</span><span style="position:absolute;left:27.30px;top:0;transform:scaleX(1.000);transform-origin:1.95px 0">s</span></div><div class="a" style="left:1240px;top:207px;width:7.5px;height:7.5px;background:transparent;border:1px solid #303030;border-top-width:2px"></div><div class="a" style="left:1256.5px;top:209.2px;width:5px;height:5px;background:transparent;border:1px solid #303030"></div><div class="a" style="left:1258px;top:207px;width:5px;height:5px;background:transparent;border-top:1.6px solid #303030;border-right:1px solid #303030"></div><svg style="left:1270px;top:208px" width="6.5" height="6" viewBox="0 0 6.5 6"><path d="M0.5 0.5L6 5.5M6 0.5L0.5 5.5" stroke="#303030" stroke-width="1.3"/></svg><div class="a" style="left:897px;top:217.5px;width:382px;height:62.5px;background:#ffffff;"></div><div class="t" style="left:899.8px;top:223.76px;font-family:'Liberation Sans', sans-serif;font-size:10.2px;color:#202020;-webkit-text-stroke:0.15px #202020;transform:scaleX(0.97);transform-origin:0 0;-webkit-text-stroke:0.05px #202020">Path</div><div class="t" style="left:1146.5px;top:223.76px;font-family:'Liberation Sans', sans-serif;font-size:10.2px;color:#202020;-webkit-text-stroke:0.15px #202020;transform:scaleX(0.97);transform-origin:0 0;-webkit-text-stroke:0.05px #202020">Base</div><div class="t" style="left:1250.2px;top:223.76px;font-family:'Liberation Sans', sans-serif;font-size:10.2px;color:#202020;-webkit-text-stroke:0.15px #202020;transform:scaleX(0.97);transform-origin:0 0;-webkit-text-stroke:0.05px #202020">Size</div><div class="a" style="left:1144px;top:218px;width:1px;height:19.4px;background:#e6e6e6;"></div><div class="a" style="left:1247px;top:218px;width:1px;height:19.4px;background:#e6e6e6;"></div><svg style="left:898.2px;top:237.1px" width="12" height="10" viewBox="0 0 12 10"><rect x="0.5" y="0.5" width="11" height="9.2" rx="0.8" fill="#f4f8ff" stroke="#3a78e0" stroke-width="1"/><rect x="0.5" y="0.5" width="11" height="1.6" fill="url(#tg)"/><path d="M1.5 9V4.5H3.5L6 6.5V9Z" fill="#5a88c8"/><rect x="6.8" y="3" width="3.5" height="6" fill="#a8c4e8"/><rect x="7.6" y="3.8" width="1.8" height="3" fill="#2858a8"/></svg><div class="t" style="left:912.9px;top:238.81px;font-family:'Liberation Serif',serif;font-size:9.3px;color:#282828;-webkit-text-stroke:0.22px #282828;-webkit-text-stroke:0.12px #282828"><span style="position:absolute;left:0.96px;top:0;transform:scaleX(1.000);transform-origin:1.29px 0">/</span><span style="position:absolute;left:3.15px;top:0;transform:scaleX(0.623);transform-origin:3.62px 0">m</span><span style="position:absolute;left:8.95px;top:0;transform:scaleX(0.970);transform-origin:2.33px 0">n</span><span style="position:absolute;left:14.49px;top:0;transform:scaleX(1.000);transform-origin:1.29px 0">t</span><span style="position:absolute;left:19.00px;top:0;transform:scaleX(1.000);transform-origin:1.29px 0">/</span><span style="position:absolute;left:22.48px;top:0;transform:scaleX(0.970);transform-origin:2.33px 0">d</span><span style="position:absolute;left:28.02px;top:0;transform:scaleX(1.000);transform-origin:1.29px 0">/</span><span style="position:absolute;left:30.72px;top:0;transform:scaleX(0.727);transform-origin:3.10px 0">C</span><span style="position:absolute;left:35.49px;top:0;transform:scaleX(0.794);transform-origin:2.84px 0">T</span><span style="position:absolute;left:40.26px;top:0;transform:scaleX(0.872);transform-origin:2.59px 0">F</span><span style="position:absolute;left:45.03px;top:0;transform:scaleX(0.970);transform-origin:2.33px 0">_</span><span style="position:absolute;left:50.57px;top:0;transform:scaleX(1.000);transform-origin:1.29px 0">t</span><span style="position:absolute;left:54.05px;top:0;transform:scaleX(0.970);transform-origin:2.33px 0">o</span><span style="position:absolute;left:58.56px;top:0;transform:scaleX(0.970);transform-origin:2.33px 0">o</span><span style="position:absolute;left:64.10px;top:0;transform:scaleX(1.000);transform-origin:1.29px 0">l</span><span style="position:absolute;left:68.10px;top:0;transform:scaleX(1.000);transform-origin:1.81px 0">s</span><span style="position:absolute;left:73.12px;top:0;transform:scaleX(1.000);transform-origin:1.29px 0">/</span><span style="position:absolute;left:77.38px;top:0;transform:scaleX(1.000);transform-origin:1.55px 0">I</span><span style="position:absolute;left:80.08px;top:0;transform:scaleX(0.672);transform-origin:3.36px 0">D</span><span style="position:absolute;left:84.59px;top:0;transform:scaleX(0.672);transform-origin:3.36px 0">A</span><span style="position:absolute;left:90.13px;top:0;transform:scaleX(0.970);transform-origin:2.33px 0">_</span><span style="position:absolute;left:94.38px;top:0;transform:scaleX(0.872);transform-origin:2.59px 0">P</span><span style="position:absolute;left:99.93px;top:0;transform:scaleX(1.000);transform-origin:1.55px 0">r</span><span style="position:absolute;left:103.66px;top:0;transform:scaleX(0.970);transform-origin:2.33px 0">o</span><span style="position:absolute;left:108.17px;top:0;transform:scaleX(0.970);transform-origin:2.33px 0">_</span><span style="position:absolute;left:112.68px;top:0;transform:scaleX(0.970);transform-origin:2.33px 0">7</span><span style="position:absolute;left:118.35px;top:0;transform:scaleX(1.000);transform-origin:1.16px 0">.</span><span style="position:absolute;left:121.70px;top:0;transform:scaleX(0.970);transform-origin:2.33px 0">7</span><span style="position:absolute;left:127.24px;top:0;transform:scaleX(1.000);transform-origin:1.29px 0">/</span><span style="position:absolute;left:130.72px;top:0;transform:scaleX(0.970);transform-origin:2.33px 0">d</span><span style="position:absolute;left:135.23px;top:0;transform:scaleX(0.970);transform-origin:2.33px 0">b</span><span style="position:absolute;left:139.74px;top:0;transform:scaleX(0.970);transform-origin:2.33px 0">g</span><span style="position:absolute;left:144.77px;top:0;transform:scaleX(1.000);transform-origin:1.81px 0">s</span><span style="position:absolute;left:149.54px;top:0;transform:scaleX(1.000);transform-origin:1.55px 0">r</span><span style="position:absolute;left:153.27px;top:0;transform:scaleX(0.970);transform-origin:2.33px 0">v</span><span style="position:absolute;left:158.81px;top:0;transform:scaleX(1.000);transform-origin:1.29px 0">/</span><span style="position:absolute;left:162.03px;top:0;transform:scaleX(0.872);transform-origin:2.59px 0">S</span><span style="position:absolute;left:164.99px;top:0;transform:scaleX(0.545);transform-origin:4.13px 0">M</span><span style="position:absolute;left:171.57px;top:0;transform:scaleX(1.000);transform-origin:2.06px 0">c</span><span style="position:absolute;left:175.82px;top:0;transform:scaleX(0.970);transform-origin:2.33px 0">_</span><span style="position:absolute;left:179.04px;top:0;transform:scaleX(0.623);transform-origin:3.62px 0">m</span><span style="position:absolute;left:185.10px;top:0;transform:scaleX(1.000);transform-origin:2.06px 0">a</span><span style="position:absolute;left:190.38px;top:0;transform:scaleX(1.000);transform-origin:1.29px 0">t</span><span style="position:absolute;left:193.86px;top:0;transform:scaleX(0.970);transform-origin:2.33px 0">h</span></div><div class="t" style="left:1145.5px;top:238.81px;font-family:'Liberation Serif',serif;font-size:9.3px;color:#282828;-webkit-text-stroke:0.22px #282828;-webkit-text-stroke:0.12px #282828"><span style="position:absolute;left:-0.07px;top:0;transform:scaleX(0.970);transform-origin:2.33px 0">0</span><span style="position:absolute;left:4.44px;top:0;transform:scaleX(0.970);transform-origin:2.33px 0">0</span><span style="position:absolute;left:8.95px;top:0;transform:scaleX(0.970);transform-origin:2.33px 0">0</span><span style="position:absolute;left:13.46px;top:0;transform:scaleX(0.970);transform-origin:2.33px 0">0</span><span style="position:absolute;left:17.97px;top:0;transform:scaleX(0.970);transform-origin:2.33px 0">5</span><span style="position:absolute;left:22.48px;top:0;transform:scaleX(0.970);transform-origin:2.33px 0">5</span><span style="position:absolute;left:26.21px;top:0;transform:scaleX(0.727);transform-origin:3.10px 0">B</span><span style="position:absolute;left:30.72px;top:0;transform:scaleX(0.727);transform-origin:3.10px 0">B</span><span style="position:absolute;left:36.01px;top:0;transform:scaleX(0.970);transform-origin:2.33px 0">0</span><span style="position:absolute;left:40.00px;top:0;transform:scaleX(0.794);transform-origin:2.84px 0">E</span><span style="position:absolute;left:45.03px;top:0;transform:scaleX(0.970);transform-origin:2.33px 0">1</span><span style="position:absolute;left:49.02px;top:0;transform:scaleX(0.794);transform-origin:2.84px 0">E</span><span style="position:absolute;left:53.27px;top:0;transform:scaleX(0.727);transform-origin:3.10px 0">C</span><span style="position:absolute;left:58.56px;top:0;transform:scaleX(0.970);transform-origin:2.33px 0">0</span><span style="position:absolute;left:63.07px;top:0;transform:scaleX(0.970);transform-origin:2.33px 0">0</span><span style="position:absolute;left:67.58px;top:0;transform:scaleX(0.970);transform-origin:2.33px 0">0</span></div><div class="t" style="left:1249px;top:238.81px;font-family:'Liberation Serif',serif;font-size:9.3px;color:#282828;-webkit-text-stroke:0.22px #282828;-webkit-text-stroke:0.12px #282828"><span style="position:absolute;left:-0.07px;top:0;transform:scaleX(0.970);transform-origin:2.33px 0">0</span><span style="position:absolute;left:4.44px;top:0;transform:scaleX(0.970);transform-origin:2.33px 0">0</span><span style="position:absolute;left:8.95px;top:0;transform:scaleX(0.970);transform-origin:2.33px 0">0</span><span style="position:absolute;left:13.46px;top:0;transform:scaleX(0.970);transform-origin:2.33px 0">0</span><span style="position:absolute;left:17.97px;top:0;transform:scaleX(0.970);transform-origin:2.33px 0">0</span><span style="position:absolute;left:22.48px;top:0;transform:scaleX(0.970);transform-origin:2.33px 0">0</span><span style="position:absolute;left:26.99px;top:0;transform:scaleX(0.970);transform-origin:2.33px 0">0</span></div><svg style="left:898.2px;top:247.14999999999998px" width="12" height="10" viewBox="0 0 12 10"><rect x="0.5" y="0.5" width="11" height="9.2" rx="0.8" fill="#f4f8ff" stroke="#3a78e0" stroke-width="1"/><rect x="0.5" y="0.5" width="11" height="1.6" fill="url(#tg)"/><path d="M1.5 9V4.5H3.5L6 6.5V9Z" fill="#5a88c8"/><rect x="6.8" y="3" width="3.5" height="6" fill="#a8c4e8"/><rect x="7.6" y="3.8" width="1.8" height="3" fill="#2858a8"/></svg><div class="t" style="left:912.9px;top:248.86px;font-family:'Liberation Serif',serif;font-size:9.3px;color:#282828;-webkit-text-stroke:0.22px #282828;-webkit-text-stroke:0.12px #282828"><span style="position:absolute;left:0.96px;top:0;transform:scaleX(1.000);transform-origin:1.29px 0">/</span><span style="position:absolute;left:4.44px;top:0;transform:scaleX(0.970);transform-origin:2.33px 0">u</span><span style="position:absolute;left:9.47px;top:0;transform:scaleX(1.000);transform-origin:1.81px 0">s</span><span style="position:absolute;left:14.24px;top:0;transform:scaleX(1.000);transform-origin:1.55px 0">r</span><span style="position:absolute;left:19.00px;top:0;transform:scaleX(1.000);transform-origin:1.29px 0">/</span><span style="position:absolute;left:23.51px;top:0;transform:scaleX(1.000);transform-origin:1.29px 0">l</span><span style="position:absolute;left:28.02px;top:0;transform:scaleX(1.000);transform-origin:1.29px 0">i</span><span style="position:absolute;left:31.50px;top:0;transform:scaleX(0.970);transform-origin:2.33px 0">b</span><span style="position:absolute;left:37.04px;top:0;transform:scaleX(1.000);transform-origin:1.29px 0">/</span><span style="position:absolute;left:40.52px;top:0;transform:scaleX(0.970);transform-origin:2.33px 0">x</span><span style="position:absolute;left:45.03px;top:0;transform:scaleX(0.970);transform-origin:2.33px 0">8</span><span style="position:absolute;left:49.54px;top:0;transform:scaleX(0.970);transform-origin:2.33px 0">6</span><span style="position:absolute;left:54.05px;top:0;transform:scaleX(0.970);transform-origin:2.33px 0">_</span><span style="position:absolute;left:58.56px;top:0;transform:scaleX(0.970);transform-origin:2.33px 0">6</span><span style="position:absolute;left:63.07px;top:0;transform:scaleX(0.970);transform-origin:2.33px 0">4</span><span style="position:absolute;left:68.36px;top:0;transform:scaleX(1.000);transform-origin:1.55px 0">-</span><span style="position:absolute;left:73.12px;top:0;transform:scaleX(1.000);transform-origin:1.29px 0">l</span><span style="position:absolute;left:77.63px;top:0;transform:scaleX(1.000);transform-origin:1.29px 0">i</span><span style="position:absolute;left:81.11px;top:0;transform:scaleX(0.970);transform-origin:2.33px 0">n</span><span style="position:absolute;left:85.62px;top:0;transform:scaleX(0.970);transform-origin:2.33px 0">u</span><span style="position:absolute;left:90.13px;top:0;transform:scaleX(0.970);transform-origin:2.33px 0">x</span><span style="position:absolute;left:95.42px;top:0;transform:scaleX(1.000);transform-origin:1.55px 0">-</span><span style="position:absolute;left:99.15px;top:0;transform:scaleX(0.970);transform-origin:2.33px 0">g</span><span style="position:absolute;left:103.66px;top:0;transform:scaleX(0.970);transform-origin:2.33px 0">n</span><span style="position:absolute;left:108.17px;top:0;transform:scaleX(0.970);transform-origin:2.33px 0">u</span><span style="position:absolute;left:113.71px;top:0;transform:scaleX(1.000);transform-origin:1.29px 0">/</span><span style="position:absolute;left:118.22px;top:0;transform:scaleX(1.000);transform-origin:1.29px 0">l</span><span style="position:absolute;left:122.73px;top:0;transform:scaleX(1.000);transform-origin:1.29px 0">i</span><span style="position:absolute;left:126.21px;top:0;transform:scaleX(0.970);transform-origin:2.33px 0">b</span><span style="position:absolute;left:130.98px;top:0;transform:scaleX(1.000);transform-origin:2.06px 0">c</span><span style="position:absolute;left:136.39px;top:0;transform:scaleX(1.000);transform-origin:1.16px 0">.</span><span style="position:absolute;left:140.26px;top:0;transform:scaleX(1.000);transform-origin:1.81px 0">s</span><span style="position:absolute;left:144.25px;top:0;transform:scaleX(0.970);transform-origin:2.33px 0">o</span><span style="position:absolute;left:149.92px;top:0;transform:scaleX(1.000);transform-origin:1.16px 0">.</span><span style="position:absolute;left:153.27px;top:0;transform:scaleX(0.970);transform-origin:2.33px 0">6</span></div><div class="t" style="left:1145.5px;top:248.86px;font-family:'Liberation Serif',serif;font-size:9.3px;color:#282828;-webkit-text-stroke:0.22px #282828;-webkit-text-stroke:0.12px #282828"><span style="position:absolute;left:-0.07px;top:0;transform:scaleX(0.970);transform-origin:2.33px 0">0</span><span style="position:absolute;left:4.44px;top:0;transform:scaleX(0.970);transform-origin:2.33px 0">0</span><span style="position:absolute;left:8.95px;top:0;transform:scaleX(0.970);transform-origin:2.33px 0">0</span><span style="position:absolute;left:13.46px;top:0;transform:scaleX(0.970);transform-origin:2.33px 0">0</span><span style="position:absolute;left:17.97px;top:0;transform:scaleX(0.970);transform-origin:2.33px 0">7</span><span style="position:absolute;left:22.22px;top:0;transform:scaleX(0.872);transform-origin:2.59px 0">F</span><span style="position:absolute;left:26.99px;top:0;transform:scaleX(0.970);transform-origin:2.33px 0">6</span><span style="position:absolute;left:31.50px;top:0;transform:scaleX(0.970);transform-origin:2.33px 0">5</span><span style="position:absolute;left:36.01px;top:0;transform:scaleX(0.970);transform-origin:2.33px 0">5</span><span style="position:absolute;left:40.52px;top:0;transform:scaleX(0.970);transform-origin:2.33px 0">3</span><span style="position:absolute;left:45.03px;top:0;transform:scaleX(0.970);transform-origin:2.33px 0">4</span><span style="position:absolute;left:49.54px;top:0;transform:scaleX(0.970);transform-origin:2.33px 0">5</span><span style="position:absolute;left:54.05px;top:0;transform:scaleX(0.970);transform-origin:2.33px 0">7</span><span style="position:absolute;left:58.56px;top:0;transform:scaleX(0.970);transform-origin:2.33px 0">0</span><span style="position:absolute;left:63.07px;top:0;transform:scaleX(0.970);transform-origin:2.33px 0">0</span><span style="position:absolute;left:67.58px;top:0;transform:scaleX(0.970);transform-origin:2.33px 0">0</span></div><div class="t" style="left:1249px;top:248.86px;font-family:'Liberation Serif',serif;font-size:9.3px;color:#282828;-webkit-text-stroke:0.22px #282828;-webkit-text-stroke:0.12px #282828"><span style="position:absolute;left:-0.07px;top:0;transform:scaleX(0.970);transform-origin:2.33px 0">0</span><span style="position:absolute;left:4.44px;top:0;transform:scaleX(0.970);transform-origin:2.33px 0">0</span><span style="position:absolute;left:8.95px;top:0;transform:scaleX(0.970);transform-origin:2.33px 0">0</span><span style="position:absolute;left:13.46px;top:0;transform:scaleX(0.970);transform-origin:2.33px 0">0</span><span style="position:absolute;left:17.97px;top:0;transform:scaleX(0.970);transform-origin:2.33px 0">0</span><span style="position:absolute;left:22.48px;top:0;transform:scaleX(0.970);transform-origin:2.33px 0">0</span><span style="position:absolute;left:26.99px;top:0;transform:scaleX(0.970);transform-origin:2.33px 0">0</span></div><svg style="left:898.2px;top:257.2px" width="12" height="10" viewBox="0 0 12 10"><rect x="0.5" y="0.5" width="11" height="9.2" rx="0.8" fill="#f4f8ff" stroke="#3a78e0" stroke-width="1"/><rect x="0.5" y="0.5" width="11" height="1.6" fill="url(#tg)"/><path d="M1.5 9V4.5H3.5L6 6.5V9Z" fill="#5a88c8"/><rect x="6.8" y="3" width="3.5" height="6" fill="#a8c4e8"/><rect x="7.6" y="3.8" width="1.8" height="3" fill="#2858a8"/></svg><div class="t" style="left:912.9px;top:258.91px;font-family:'Liberation Serif',serif;font-size:9.3px;color:#282828;-webkit-text-stroke:0.22px #282828;-webkit-text-stroke:0.12px #282828"><span style="position:absolute;left:0.96px;top:0;transform:scaleX(1.000);transform-origin:1.29px 0">/</span><span style="position:absolute;left:4.44px;top:0;transform:scaleX(0.970);transform-origin:2.33px 0">u</span><span style="position:absolute;left:9.47px;top:0;transform:scaleX(1.000);transform-origin:1.81px 0">s</span><span style="position:absolute;left:14.24px;top:0;transform:scaleX(1.000);transform-origin:1.55px 0">r</span><span style="position:absolute;left:19.00px;top:0;transform:scaleX(1.000);transform-origin:1.29px 0">/</span><span style="position:absolute;left:23.51px;top:0;transform:scaleX(1.000);transform-origin:1.29px 0">l</span><span style="position:absolute;left:28.02px;top:0;transform:scaleX(1.000);transform-origin:1.29px 0">i</span><span style="position:absolute;left:31.50px;top:0;transform:scaleX(0.970);transform-origin:2.33px 0">b</span><span style="position:absolute;left:37.04px;top:0;transform:scaleX(1.000);transform-origin:1.29px 0">/</span><span style="position:absolute;left:40.52px;top:0;transform:scaleX(0.970);transform-origin:2.33px 0">x</span><span style="position:absolute;left:45.03px;top:0;transform:scaleX(0.970);transform-origin:2.33px 0">8</span><span style="position:absolute;left:49.54px;top:0;transform:scaleX(0.970);transform-origin:2.33px 0">6</span><span style="position:absolute;left:54.05px;top:0;transform:scaleX(0.970);transform-origin:2.33px 0">_</span><span style="position:absolute;left:58.56px;top:0;transform:scaleX(0.970);transform-origin:2.33px 0">6</span><span style="position:absolute;left:63.07px;top:0;transform:scaleX(0.970);transform-origin:2.33px 0">4</span><span style="position:absolute;left:68.36px;top:0;transform:scaleX(1.000);transform-origin:1.55px 0">-</span><span style="position:absolute;left:73.12px;top:0;transform:scaleX(1.000);transform-origin:1.29px 0">l</span><span style="position:absolute;left:77.63px;top:0;transform:scaleX(1.000);transform-origin:1.29px 0">i</span><span style="position:absolute;left:81.11px;top:0;transform:scaleX(0.970);transform-origin:2.33px 0">n</span><span style="position:absolute;left:85.62px;top:0;transform:scaleX(0.970);transform-origin:2.33px 0">u</span><span style="position:absolute;left:90.13px;top:0;transform:scaleX(0.970);transform-origin:2.33px 0">x</span><span style="position:absolute;left:95.42px;top:0;transform:scaleX(1.000);transform-origin:1.55px 0">-</span><span style="position:absolute;left:99.15px;top:0;transform:scaleX(0.970);transform-origin:2.33px 0">g</span><span style="position:absolute;left:103.66px;top:0;transform:scaleX(0.970);transform-origin:2.33px 0">n</span><span style="position:absolute;left:108.17px;top:0;transform:scaleX(0.970);transform-origin:2.33px 0">u</span><span style="position:absolute;left:113.71px;top:0;transform:scaleX(1.000);transform-origin:1.29px 0">/</span><span style="position:absolute;left:118.22px;top:0;transform:scaleX(1.000);transform-origin:1.29px 0">l</span><span style="position:absolute;left:121.70px;top:0;transform:scaleX(0.970);transform-origin:2.33px 0">d</span><span style="position:absolute;left:126.99px;top:0;transform:scaleX(1.000);transform-origin:1.55px 0">-</span><span style="position:absolute;left:131.75px;top:0;transform:scaleX(1.000);transform-origin:1.29px 0">l</span><span style="position:absolute;left:136.26px;top:0;transform:scaleX(1.000);transform-origin:1.29px 0">i</span><span style="position:absolute;left:139.74px;top:0;transform:scaleX(0.970);transform-origin:2.33px 0">n</span><span style="position:absolute;left:144.25px;top:0;transform:scaleX(0.970);transform-origin:2.33px 0">u</span><span style="position:absolute;left:148.76px;top:0;transform:scaleX(0.970);transform-origin:2.33px 0">x</span><span style="position:absolute;left:154.05px;top:0;transform:scaleX(1.000);transform-origin:1.55px 0">-</span><span style="position:absolute;left:157.78px;top:0;transform:scaleX(0.970);transform-origin:2.33px 0">x</span><span style="position:absolute;left:162.29px;top:0;transform:scaleX(0.970);transform-origin:2.33px 0">8</span><span style="position:absolute;left:166.80px;top:0;transform:scaleX(0.970);transform-origin:2.33px 0">6</span><span style="position:absolute;left:172.09px;top:0;transform:scaleX(1.000);transform-origin:1.55px 0">-</span><span style="position:absolute;left:175.82px;top:0;transform:scaleX(0.970);transform-origin:2.33px 0">6</span><span style="position:absolute;left:180.33px;top:0;transform:scaleX(0.970);transform-origin:2.33px 0">4</span><span style="position:absolute;left:186.00px;top:0;transform:scaleX(1.000);transform-origin:1.16px 0">.</span><span style="position:absolute;left:189.87px;top:0;transform:scaleX(1.000);transform-origin:1.81px 0">s</span><span style="position:absolute;left:193.86px;top:0;transform:scaleX(0.970);transform-origin:2.33px 0">o</span><span style="position:absolute;left:199.53px;top:0;transform:scaleX(1.000);transform-origin:1.16px 0">.</span><span style="position:absolute;left:202.88px;top:0;transform:scaleX(0.970);transform-origin:2.33px 0">2</span></div><div class="t" style="left:1145.5px;top:258.91px;font-family:'Liberation Serif',serif;font-size:9.3px;color:#282828;-webkit-text-stroke:0.22px #282828;-webkit-text-stroke:0.12px #282828"><span style="position:absolute;left:-0.07px;top:0;transform:scaleX(0.970);transform-origin:2.33px 0">0</span><span style="position:absolute;left:4.44px;top:0;transform:scaleX(0.970);transform-origin:2.33px 0">0</span><span style="position:absolute;left:8.95px;top:0;transform:scaleX(0.970);transform-origin:2.33px 0">0</span><span style="position:absolute;left:13.46px;top:0;transform:scaleX(0.970);transform-origin:2.33px 0">0</span><span style="position:absolute;left:17.97px;top:0;transform:scaleX(0.970);transform-origin:2.33px 0">7</span><span style="position:absolute;left:22.22px;top:0;transform:scaleX(0.872);transform-origin:2.59px 0">F</span><span style="position:absolute;left:26.99px;top:0;transform:scaleX(0.970);transform-origin:2.33px 0">6</span><span style="position:absolute;left:31.50px;top:0;transform:scaleX(0.970);transform-origin:2.33px 0">5</span><span style="position:absolute;left:36.01px;top:0;transform:scaleX(0.970);transform-origin:2.33px 0">5</span><span style="position:absolute;left:40.52px;top:0;transform:scaleX(0.970);transform-origin:2.33px 0">3</span><span style="position:absolute;left:45.03px;top:0;transform:scaleX(0.970);transform-origin:2.33px 0">6</span><span style="position:absolute;left:49.54px;top:0;transform:scaleX(0.970);transform-origin:2.33px 0">8</span><span style="position:absolute;left:54.05px;top:0;transform:scaleX(0.970);transform-origin:2.33px 0">7</span><span style="position:absolute;left:58.56px;top:0;transform:scaleX(0.970);transform-origin:2.33px 0">0</span><span style="position:absolute;left:63.07px;top:0;transform:scaleX(0.970);transform-origin:2.33px 0">0</span><span style="position:absolute;left:67.58px;top:0;transform:scaleX(0.970);transform-origin:2.33px 0">0</span></div><div class="t" style="left:1249px;top:258.91px;font-family:'Liberation Serif',serif;font-size:9.3px;color:#282828;-webkit-text-stroke:0.22px #282828;-webkit-text-stroke:0.12px #282828"><span style="position:absolute;left:-0.07px;top:0;transform:scaleX(0.970);transform-origin:2.33px 0">0</span><span style="position:absolute;left:4.44px;top:0;transform:scaleX(0.970);transform-origin:2.33px 0">0</span><span style="position:absolute;left:8.95px;top:0;transform:scaleX(0.970);transform-origin:2.33px 0">0</span><span style="position:absolute;left:13.46px;top:0;transform:scaleX(0.970);transform-origin:2.33px 0">0</span><span style="position:absolute;left:17.97px;top:0;transform:scaleX(0.970);transform-origin:2.33px 0">0</span><span style="position:absolute;left:22.48px;top:0;transform:scaleX(0.970);transform-origin:2.33px 0">0</span><span style="position:absolute;left:26.99px;top:0;transform:scaleX(0.970);transform-origin:2.33px 0">0</span></div><svg style="left:898.2px;top:267.25px" width="12" height="10" viewBox="0 0 12 10"><rect x="0.5" y="0.5" width="11" height="9.2" rx="0.8" fill="#f4f8ff" stroke="#3a78e0" stroke-width="1"/><rect x="0.5" y="0.5" width="11" height="1.6" fill="url(#tg)"/><path d="M1.5 9V4.5H3.5L6 6.5V9Z" fill="#5a88c8"/><rect x="6.8" y="3" width="3.5" height="6" fill="#a8c4e8"/><rect x="7.6" y="3.8" width="1.8" height="3" fill="#2858a8"/></svg><div class="t" style="left:912.9px;top:268.96px;font-family:'Liberation Serif',serif;font-size:9.3px;color:#282828;-webkit-text-stroke:0.22px #282828;-webkit-text-stroke:0.12px #282828"><span style="position:absolute;left:0.71px;top:0;transform:scaleX(1.000);transform-origin:1.55px 0">[</span><span style="position:absolute;left:4.44px;top:0;transform:scaleX(0.970);transform-origin:2.33px 0">v</span><span style="position:absolute;left:8.95px;top:0;transform:scaleX(0.970);transform-origin:2.33px 0">d</span><span style="position:absolute;left:13.98px;top:0;transform:scaleX(1.000);transform-origin:1.81px 0">s</span><span style="position:absolute;left:17.97px;top:0;transform:scaleX(0.970);transform-origin:2.33px 0">o</span><span style="position:absolute;left:23.26px;top:0;transform:scaleX(1.000);transform-origin:1.55px 0">]</span></div><div class="t" style="left:1145.5px;top:268.96px;font-family:'Liberation Serif',serif;font-size:9.3px;color:#282828;-webkit-text-stroke:0.22px #282828;-webkit-text-stroke:0.12px #282828"><span style="position:absolute;left:-0.07px;top:0;transform:scaleX(0.970);transform-origin:2.33px 0">0</span><span style="position:absolute;left:4.44px;top:0;transform:scaleX(0.970);transform-origin:2.33px 0">0</span><span style="position:absolute;left:8.95px;top:0;transform:scaleX(0.970);transform-origin:2.33px 0">0</span><span style="position:absolute;left:13.46px;top:0;transform:scaleX(0.970);transform-origin:2.33px 0">0</span><span style="position:absolute;left:17.97px;top:0;transform:scaleX(0.970);transform-origin:2.33px 0">7</span><span style="position:absolute;left:22.22px;top:0;transform:scaleX(0.872);transform-origin:2.59px 0">F</span><span style="position:absolute;left:26.73px;top:0;transform:scaleX(0.872);transform-origin:2.59px 0">F</span><span style="position:absolute;left:30.47px;top:0;transform:scaleX(0.672);transform-origin:3.36px 0">D</span><span style="position:absolute;left:36.01px;top:0;transform:scaleX(0.970);transform-origin:2.33px 0">1</span><span style="position:absolute;left:39.49px;top:0;transform:scaleX(0.672);transform-origin:3.36px 0">A</span><span style="position:absolute;left:44.00px;top:0;transform:scaleX(0.672);transform-origin:3.36px 0">D</span><span style="position:absolute;left:48.51px;top:0;transform:scaleX(0.672);transform-origin:3.36px 0">A</span><span style="position:absolute;left:54.05px;top:0;transform:scaleX(0.970);transform-origin:2.33px 0">8</span><span style="position:absolute;left:58.56px;top:0;transform:scaleX(0.970);transform-origin:2.33px 0">0</span><span style="position:absolute;left:63.07px;top:0;transform:scaleX(0.970);transform-origin:2.33px 0">0</span><span style="position:absolute;left:67.58px;top:0;transform:scaleX(0.970);transform-origin:2.33px 0">0</span></div><div class="t" style="left:1249px;top:268.96px;font-family:'Liberation Serif',serif;font-size:9.3px;color:#282828;-webkit-text-stroke:0.22px #282828;-webkit-text-stroke:0.12px #282828"><span style="position:absolute;left:-0.07px;top:0;transform:scaleX(0.970);transform-origin:2.33px 0">0</span><span style="position:absolute;left:4.44px;top:0;transform:scaleX(0.970);transform-origin:2.33px 0">0</span><span style="position:absolute;left:8.95px;top:0;transform:scaleX(0.970);transform-origin:2.33px 0">0</span><span style="position:absolute;left:13.46px;top:0;transform:scaleX(0.970);transform-origin:2.33px 0">0</span><span style="position:absolute;left:17.97px;top:0;transform:scaleX(0.970);transform-origin:2.33px 0">0</span><span style="position:absolute;left:22.48px;top:0;transform:scaleX(0.970);transform-origin:2.33px 0">0</span><span style="position:absolute;left:26.99px;top:0;transform:scaleX(0.970);transform-origin:2.33px 0">0</span></div><div class="a" style="left:1279px;top:218px;width:1px;height:73px;background:#b4b4b4;"></div><div class="a" style="left:897px;top:279.5px;width:382px;height:10.8px;background:#f0f0f0;"></div><div class="a" style="left:910px;top:282px;width:300px;height:5.8px;background:#888;"></div><div class="a" style="left:896px;top:308px;width:384px;height:104.19999999999999px;background:transparent;border:1px solid #b4b4b4"></div><div class="a" style="left:897px;top:309px;width:382px;height:15px;background:#f0f0f0;border-bottom:1px solid #bcbcbc"></div><svg style="left:898px;top:311.4px" width="8" height="8" viewBox="0 0 8 8"><rect x="0" y="0" width="8" height="8" fill="#7ea4d8"/><rect x="0" y="0" width="8" height="1.8" fill="url(#tg)"/><path d="M1.2 2.8L4 5.5L6.8 2.8" stroke="#f4f8ff" stroke-width="1.2" fill="none"/><rect x="1" y="5" width="2.5" height="2.5" fill="#b8d0f0"/></svg><div class="t" style="left:910.4px;top:311.12px;font-family:'Liberation Serif',serif;font-size:10px;color:#303030;-webkit-text-stroke:0.22px #303030;"><span style="position:absolute;left:-0.80px;top:0;transform:scaleX(0.737);transform-origin:3.05px 0">T</span><span style="position:absolute;left:4.25px;top:0;transform:scaleX(0.900);transform-origin:2.50px 0">h</span><span style="position:absolute;left:9.58px;top:0;transform:scaleX(1.000);transform-origin:1.67px 0">r</span><span style="position:absolute;left:13.53px;top:0;transform:scaleX(1.000);transform-origin:2.22px 0">e</span><span style="position:absolute;left:18.03px;top:0;transform:scaleX(1.000);transform-origin:2.22px 0">a</span><span style="position:absolute;left:22.25px;top:0;transform:scaleX(0.900);transform-origin:2.50px 0">d</span><span style="position:absolute;left:27.30px;top:0;transform:scaleX(1.000);transform-origin:1.95px 0">s</span></div><div class="a" style="left:1240px;top:312.5px;width:7.5px;height:7.5px;background:transparent;border:1px solid #303030;border-top-width:2px"></div><div class="a" style="left:1256.5px;top:314.7px;width:5px;height:5px;background:transparent;border:1px solid #303030"></div><div class="a" style="left:1258px;top:312.5px;width:5px;height:5px;background:transparent;border-top:1.6px solid #303030;border-right:1px solid #303030"></div><svg style="left:1270px;top:313.5px" width="6.5" height="6" viewBox="0 0 6.5 6"><path d="M0.5 0.5L6 5.5M6 0.5L0.5 5.5" stroke="#303030" stroke-width="1.3"/></svg><div class="a" style="left:897px;top:324.5px;width:382px;height:86.7px;background:#ffffff;"></div><div class="t" style="left:899.3px;top:329.76px;font-family:'Liberation Sans', sans-serif;font-size:10.2px;color:#202020;-webkit-text-stroke:0.15px #202020;transform:scaleX(0.97);transform-origin:0 0;-webkit-text-stroke:0.05px #202020">Decimal</div><div class="t" style="left:942.9px;top:329.76px;font-family:'Liberation Sans', sans-serif;font-size:10.2px;color:#202020;-webkit-text-stroke:0.15px #202020;transform:scaleX(0.97);transform-origin:0 0;-webkit-text-stroke:0.05px #202020">Hex</div><div class="t" style="left:974.3px;top:329.76px;font-family:'Liberation Sans', sans-serif;font-size:10.2px;color:#202020;-webkit-text-stroke:0.15px #202020;transform:scaleX(0.97);transform-origin:0 0;-webkit-text-stroke:0.05px #202020">State</div><div class="t" style="left:1035.5px;top:329.76px;font-family:'Liberation Sans', sans-serif;font-size:10.2px;color:#202020;-webkit-text-stroke:0.15px #202020;transform:scaleX(0.97);transform-origin:0 0;-webkit-text-stroke:0.05px #202020">Name</div><div class="a" style="left:939.7px;top:324px;width:1px;height:16px;background:#e8e8e8;"></div><div class="a" style="left:971.7px;top:324px;width:1px;height:16px;background:#e8e8e8;"></div><div class="a" style="left:1032.7px;top:324px;width:1px;height:16px;background:#e8e8e8;"></div><svg style="left:898px;top:343px" width="11" height="10" viewBox="0 0 11 10"><rect x="0.5" y="0.5" width="10" height="9" fill="#e8f2ff" stroke="#3a7ad8"/><rect x="1" y="1" width="9" height="1.5" fill="#40a8f0"/><circle cx="4.5" cy="5.5" r="2.2" fill="none" stroke="#3060b0" stroke-width="0.9"/><circle cx="6.5" cy="6.5" r="2.2" fill="none" stroke="#3060b0" stroke-width="0.9"/></svg><div class="t" style="left:913.8px;top:343.73px;font-family:'Liberation Serif',serif;font-size:10px;color:#202020;-webkit-text-stroke:0.22px #202020;font-weight:bold;"><span style="position:absolute;left:0.00px;top:0;transform:scaleX(1.000);transform-origin:2.50px 0">9</span><span style="position:absolute;left:5.00px;top:0;transform:scaleX(1.000);transform-origin:2.50px 0">8</span><span style="position:absolute;left:10.00px;top:0;transform:scaleX(1.000);transform-origin:2.50px 0">3</span></div><div class="t" style="left:941.8px;top:343.73px;font-family:'Liberation Serif',serif;font-size:10px;color:#202020;-webkit-text-stroke:0.22px #202020;font-weight:bold;"><span style="position:absolute;left:0.00px;top:0;transform:scaleX(1.000);transform-origin:2.50px 0">3</span><span style="position:absolute;left:3.89px;top:0;transform:scaleX(0.692);transform-origin:3.61px 0">D</span><span style="position:absolute;left:10.00px;top:0;transform:scaleX(1.000);transform-origin:2.50px 0">7</span></div><div class="t" style="left:973.2px;top:343.73px;font-family:'Liberation Serif',serif;font-size:10px;color:#202020;-webkit-text-stroke:0.22px #202020;font-weight:bold;"><span style="position:absolute;left:-1.11px;top:0;transform:scaleX(0.692);transform-origin:3.61px 0">R</span><span style="position:absolute;left:5.28px;top:0;transform:scaleX(1.000);transform-origin:2.22px 0">e</span><span style="position:absolute;left:10.00px;top:0;transform:scaleX(1.000);transform-origin:2.50px 0">a</span><span style="position:absolute;left:14.72px;top:0;transform:scaleX(0.899);transform-origin:2.78px 0">d</span><span style="position:absolute;left:20.00px;top:0;transform:scaleX(1.000);transform-origin:2.50px 0">y</span></div><div class="t" style="left:1034.8px;top:343.73px;font-family:'Liberation Serif',serif;font-size:10px;color:#202020;-webkit-text-stroke:0.22px #202020;font-weight:bold;"><span style="position:absolute;left:-0.28px;top:0;transform:scaleX(0.899);transform-origin:2.78px 0">S</span><span style="position:absolute;left:2.78px;top:0;transform:scaleX(0.530);transform-origin:4.72px 0">M</span><span style="position:absolute;left:10.28px;top:0;transform:scaleX(1.000);transform-origin:2.22px 0">c</span><span style="position:absolute;left:15.00px;top:0;transform:scaleX(1.000);transform-origin:2.50px 0">_</span><span style="position:absolute;left:18.33px;top:0;transform:scaleX(0.600);transform-origin:4.17px 0">m</span><span style="position:absolute;left:25.00px;top:0;transform:scaleX(1.000);transform-origin:2.50px 0">a</span><span style="position:absolute;left:30.83px;top:0;transform:scaleX(1.000);transform-origin:1.67px 0">t</span><span style="position:absolute;left:34.72px;top:0;transform:scaleX(0.899);transform-origin:2.78px 0">h</span></div><div class="a" style="left:0px;top:412px;width:893px;height:1px;background:#80b0e0;"></div><div class="a" style="left:0px;top:415px;width:791.6px;height:16.5px;background:transparent;border:1px solid #b4b4b4;border-bottom:0"></div><div class="a" style="left:0px;top:538px;width:791.6px;height:1px;background:#b8b8b8;"></div><div class="a" style="left:1px;top:416px;width:789.6px;height:14.5px;background:#f0f0f0;border-bottom:1px solid #bcbcbc"></div><div class="a" style="left:0px;top:415px;width:791.6px;height:1px;background:#b4b4b4;"></div><svg style="left:2px;top:418px" width="8" height="8" viewBox="0 0 8 8"><rect x="0.5" y="0.5" width="7" height="7" fill="#e0eeff" stroke="#3a7ad8"/><rect x="1" y="1" width="6" height="1.4" fill="#40a8f0"/><circle cx="4" cy="4.6" r="1.8" fill="none" stroke="#5060d0" stroke-width="0.9"/></svg><div class="t" style="left:14px;top:417.73px;font-family:'Liberation Serif',serif;font-size:10px;color:#303030;-webkit-text-stroke:0.22px #303030;"><span style="position:absolute;left:-1.36px;top:0;transform:scaleX(0.623);transform-origin:3.61px 0">H</span><span style="position:absolute;left:4.53px;top:0;transform:scaleX(1.000);transform-origin:2.22px 0">e</span><span style="position:absolute;left:8.75px;top:0;transform:scaleX(0.900);transform-origin:2.50px 0">x</span><span style="position:absolute;left:16.64px;top:0;transform:scaleX(0.623);transform-origin:3.61px 0">V</span><span style="position:absolute;left:23.36px;top:0;transform:scaleX(1.000);transform-origin:1.39px 0">i</span><span style="position:absolute;left:27.03px;top:0;transform:scaleX(1.000);transform-origin:2.22px 0">e</span><span style="position:absolute;left:30.14px;top:0;transform:scaleX(0.623);transform-origin:3.61px 0">w</span><span style="position:absolute;left:36.58px;top:0;transform:scaleX(1.000);transform-origin:1.67px 0">-</span><span style="position:absolute;left:40.25px;top:0;transform:scaleX(0.900);transform-origin:2.50px 0">1</span></div><div class="a" style="left:751.2px;top:419px;width:7.5px;height:7.5px;background:transparent;border:1px solid #303030;border-top-width:2px"></div><div class="a" style="left:767.7px;top:421.2px;width:5px;height:5px;background:transparent;border:1px solid #303030"></div><div class="a" style="left:769.2px;top:419px;width:5px;height:5px;background:transparent;border-top:1.6px solid #303030;border-right:1px solid #303030"></div><svg style="left:781.2px;top:420px" width="6.5" height="6" viewBox="0 0 6.5 6"><path d="M0.5 0.5L6 5.5M6 0.5L0.5 5.5" stroke="#303030" stroke-width="1.3"/></svg><div class="a" style="left:0px;top:430.6px;width:778px;height:95.3px;background:#c8ffff;"></div><div class="a" style="left:778px;top:430.6px;width:13.6px;height:95.3px;background:#f0f0f0;"></div><div class="a" style="left:781.6px;top:444.4px;width:5.9px;height:13.1px;background:#888;"></div><div class="t c" style="left:0.3px;top:433.57px;font-size:9.1667px;"><span style="color:#7c7c7c">000055BB0E1F0030</span><span style="color:#000">  </span><span style="color:#008800">00</span><span style="color:#000"> </span><span style="color:#008800">00</span><span style="color:#000"> </span><span style="color:#008800">00</span><span style="color:#000"> </span><span style="color:#008800">00</span><span style="color:#000"> </span><span style="color:#008800">00</span><span style="color:#000"> </span><span style="color:#008800">00</span><span style="color:#000"> </span><span style="color:#008800">00</span><span style="color:#000"> </span><span style="color:#008800">00</span><span style="color:#000"> </span><span style="color:#000"> </span><span style="color:#008800">00</span><span style="color:#000"> </span><span style="color:#008800">00</span><span style="color:#000"> </span><span style="color:#008800">00</span><span style="color:#000"> </span><span style="color:#008800">00</span><span style="color:#000"> </span><span style="color:#008800">00</span><span style="color:#000"> </span><span style="color:#008800">00</span><span style="color:#000"> </span><span style="color:#008800">00</span><span style="color:#000"> </span><span style="color:#008800">00</span><span style="color:#000"> </span><span style="color:#000">   </span></div><div class="t c" style="left:375px;top:433.57px;font-size:9.1667px;"><span style="color:#1818e8">................</span></div><div class="t c" style="left:0.3px;top:445.00px;font-size:9.1667px;"><span style="color:#7c7c7c">000055BB0E1F0040</span><span style="color:#000">  </span><span style="color:#008800">00</span><span style="color:#000"> </span><span style="color:#008800">00</span><span style="color:#000"> </span><span style="color:#008800">00</span><span style="color:#000"> </span><span style="color:#008800">00</span><span style="color:#000"> </span><span style="color:#008800">00</span><span style="color:#000"> </span><span style="color:#008800">00</span><span style="color:#000"> </span><span style="color:#008800">00</span><span style="color:#000"> </span><span style="color:#008800">00</span><span style="color:#000"> </span><span style="color:#000"> </span><span style="color:#008800">00</span><span style="color:#000"> </span><span style="color:#008800">00</span><span style="color:#000"> </span><span style="color:#008800">00</span><span style="color:#000"> </span><span style="color:#008800">00</span><span style="color:#000"> </span><span style="color:#008800">00</span><span style="color:#000"> </span><span style="color:#008800">00</span><span style="color:#000"> </span><span style="color:#008800">00</span><span style="color:#000"> </span><span style="color:#008800">00</span><span style="color:#000"> </span><span style="color:#000">   </span></div><div class="t c" style="left:375px;top:445.00px;font-size:9.1667px;"><span style="color:#1818e8">................</span></div><div class="t c" style="left:0.3px;top:456.43px;font-size:9.1667px;"><span style="color:#7c7c7c">000055BB0E1F0050</span><span style="color:#000">  </span><span style="color:#008800">00</span><span style="color:#000"> </span><span style="color:#008800">00</span><span style="color:#000"> </span><span style="color:#008800">00</span><span style="color:#000"> </span><span style="color:#008800">00</span><span style="color:#000"> </span><span style="color:#008800">00</span><span style="color:#000"> </span><span style="color:#008800">00</span><span style="color:#000"> </span><span style="color:#008800">00</span><span style="color:#000"> </span><span style="color:#008800">00</span><span style="color:#000"> </span><span style="color:#000"> </span><span style="color:#008800">00</span><span style="color:#000"> </span><span style="color:#008800">00</span><span style="color:#000"> </span><span style="color:#008800">00</span><span style="color:#000"> </span><span style="color:#008800">00</span><span style="color:#000"> </span><span style="color:#008800">00</span><span style="color:#000"> </span><span style="color:#008800">00</span><span style="color:#000"> </span><span style="color:#008800">00</span><span style="color:#000"> </span><span style="color:#008800">00</span><span style="color:#000"> </span><span style="color:#000">   </span></div><div class="t c" style="left:375px;top:456.43px;font-size:9.1667px;"><span style="color:#1818e8">................</span></div><div class="t c" style="left:0.3px;top:467.86px;font-size:9.1667px;"><span style="color:#7c7c7c">000055BB0E1F0060</span><span style="color:#000">  </span><span style="color:#101090">00</span><span style="color:#000"> </span><span style="color:#101090">00</span><span style="color:#000"> </span><span style="color:#101090">00</span><span style="color:#000"> </span><span style="color:#101090">00</span><span style="color:#000"> </span><span style="color:#101090">00</span><span style="color:#000"> </span><span style="color:#101090">00</span><span style="color:#000"> </span><span style="color:#101090">00</span><span style="color:#000"> </span><span style="color:#101090">00</span><span style="color:#000"> </span><span style="color:#000"> </span><span style="color:#008800">00</span><span style="color:#000"> </span><span style="color:#008800">00</span><span style="color:#000"> </span><span style="color:#008800">00</span><span style="color:#000"> </span><span style="color:#008800">00</span><span style="color:#000"> </span><span style="color:#008800">00</span><span style="color:#000"> </span><span style="color:#008800">00</span><span style="color:#000"> </span><span style="color:#008800">00</span><span style="color:#000"> </span><span style="color:#008800">00</span><span style="color:#000"> </span><span style="color:#000">   </span></div><div class="t c" style="left:375px;top:467.86px;font-size:9.1667px;"><span style="color:#1818e8">................</span></div><div class="a" style="left:0px;top:477.12000000000006px;width:778px;height:11.4px;background:#b8e2e2;"></div><div class="t c" style="left:0.3px;top:479.29px;font-size:9.1667px;"><span style="color:#7c7c7c">000055BB0E1F0070</span><span style="color:#000">  </span><span style="color:#101090">00</span><span style="color:#000"> </span><span style="color:#101090">00</span><span style="color:#000"> </span><span style="color:#101090">00</span><span style="color:#000"> </span><span style="color:#101090">00</span><span style="color:#000"> </span><span style="color:#101090">00</span><span style="color:#000"> </span><span style="color:#101090">00</span><span style="color:#000"> </span><span style="color:#101090">00</span><span style="color:#000"> </span><span style="color:#101090">00</span><span style="color:#000"> </span><span style="color:#000"> </span><span style="color:#101090">00</span><span style="color:#000"> </span><span style="color:#101090">00</span><span style="color:#000"> </span><span style="color:#101090">00</span><span style="color:#000"> </span><span style="color:#101090">00</span><span style="color:#000"> </span><span style="color:#101090">00</span><span style="color:#000"> </span><span style="color:#101090">00</span><span style="color:#000"> </span><span style="color:#101090">00</span><span style="color:#000"> </span><span style="color:#101090">00</span><span style="color:#000"> </span><span style="color:#000">   </span></div><div class="a" style="left:352.4px;top:477.12000000000006px;width:11.3px;height:11.4px;background:#10106a;"></div><div class="t c" style="left:352.3px;top:479.29px;font-size:9.1667px;"><span style="color:#d8d8ff">00</span></div><div class="t c" style="left:375px;top:479.29px;font-size:9.1667px;"><span style="color:#1818e8">................</span></div><div class="t c" style="left:0.3px;top:490.72px;font-size:9.1667px;"><span style="color:#7c7c7c">000055BB0E1F0080</span><span style="color:#000">  </span><span style="color:#101090">00</span><span style="color:#000"> </span><span style="color:#101090">00</span><span style="color:#000"> </span><span style="color:#101090">00</span><span style="color:#000"> </span><span style="color:#101090">00</span><span style="color:#000"> </span><span style="color:#101090">00</span><span style="color:#000"> </span><span style="color:#101090">00</span><span style="color:#000"> </span><span style="color:#101090">00</span><span style="color:#000"> </span><span style="color:#101090">00</span><span style="color:#000"> </span><span style="color:#000"> </span><span style="color:#101090">00</span><span style="color:#000"> </span><span style="color:#101090">00</span><span style="color:#000"> </span><span style="color:#101090">00</span><span style="color:#000"> </span><span style="color:#101090">00</span><span style="color:#000"> </span><span style="color:#101090">00</span><span style="color:#000"> </span><span style="color:#101090">00</span><span style="color:#000"> </span><span style="color:#101090">00</span><span style="color:#000"> </span><span style="color:#101090">00</span><span style="color:#000"> </span><span style="color:#000">   </span></div><div class="t c" style="left:375px;top:490.72px;font-size:9.1667px;"><span style="color:#1818e8">................</span></div><div class="t c" style="left:0.3px;top:502.15px;font-size:9.1667px;"><span style="color:#7c7c7c">000055BB0E1F0090</span><span style="color:#000">  </span><span style="color:#101090">00</span><span style="color:#000"> </span><span style="color:#101090">00</span><span style="color:#000"> </span><span style="color:#101090">00</span><span style="color:#000"> </span><span style="color:#101090">00</span><span style="color:#000"> </span><span style="color:#101090">00</span><span style="color:#000"> </span><span style="color:#101090">00</span><span style="color:#000"> </span><span style="color:#101090">00</span><span style="color:#000"> </span><span style="color:#101090">00</span><span style="color:#000"> </span><span style="color:#000"> </span><span style="color:#101090">00</span><span style="color:#000"> </span><span style="color:#101090">00</span><span style="color:#000"> </span><span style="color:#101090">00</span><span style="color:#000"> </span><span style="color:#101090">00</span><span style="color:#000"> </span><span style="color:#101090">00</span><span style="color:#000"> </span><span style="color:#101090">00</span><span style="color:#000"> </span><span style="color:#101090">00</span><span style="color:#000"> </span><span style="color:#101090">00</span><span style="color:#000"> </span><span style="color:#000">   </span></div><div class="t c" style="left:375px;top:502.15px;font-size:9.1667px;"><span style="color:#1818e8">................</span></div><div class="t c" style="left:0.3px;top:513.58px;font-size:9.1667px;"><span style="color:#7c7c7c">000055BB0E1F00A0</span><span style="color:#000">  </span><span style="color:#101090">00</span><span style="color:#000"> </span><span style="color:#101090">00</span><span style="color:#000"> </span><span style="color:#101090">00</span><span style="color:#000"> </span><span style="color:#101090">00</span><span style="color:#000"> </span><span style="color:#101090">00</span><span style="color:#000"> </span><span style="color:#101090">00</span><span style="color:#000"> </span><span style="color:#101090">00</span><span style="color:#000"> </span><span style="color:#101090">00</span><span style="color:#000"> </span><span style="color:#000"> </span><span style="color:#101090">00</span><span style="color:#000"> </span><span style="color:#101090">00</span><span style="color:#000"> </span><span style="color:#101090">00</span><span style="color:#000"> </span><span style="color:#101090">00</span><span style="color:#000"> </span><span style="color:#101090">00</span><span style="color:#000"> </span><span style="color:#101090">00</span><span style="color:#000"> </span><span style="color:#101090">00</span><span style="color:#000"> </span><span style="color:#101090">00</span><span style="color:#000"> </span><span style="color:#000">   </span></div><div class="t c" style="left:375px;top:513.58px;font-size:9.1667px;"><span style="color:#1818e8">................</span></div><div class="a" style="left:0px;top:526px;width:791.6px;height:12px;background:#f0f0f0;"></div><div class="t" style="left:1.5px;top:527.74px;font-family:'Liberation Serif',serif;font-size:9.5px;color:#404040;-webkit-text-stroke:0.22px #404040;-webkit-text-stroke:0.1px #404040"><span style="position:absolute;left:-0.68px;top:0;transform:scaleX(0.802);transform-origin:3.43px 0">U</span><span style="position:absolute;left:4.82px;top:0;transform:scaleX(0.802);transform-origin:3.43px 0">N</span><span style="position:absolute;left:10.32px;top:0;transform:scaleX(0.802);transform-origin:3.43px 0">K</span><span style="position:absolute;left:15.82px;top:0;transform:scaleX(0.802);transform-origin:3.43px 0">N</span><span style="position:absolute;left:21.32px;top:0;transform:scaleX(0.802);transform-origin:3.43px 0">O</span><span style="position:absolute;left:25.77px;top:0;transform:scaleX(0.613);transform-origin:4.48px 0">W</span><span style="position:absolute;left:32.32px;top:0;transform:scaleX(0.802);transform-origin:3.43px 0">N</span></div><div class="a" style="left:40.6px;top:527px;width:1px;height:11px;background:#d8d8d8;"></div><div class="t" style="left:43px;top:527.74px;font-family:'Liberation Serif',serif;font-size:9.5px;color:#404040;-webkit-text-stroke:0.22px #404040;-webkit-text-stroke:0.1px #404040"><span style="position:absolute;left:0.37px;top:0;transform:scaleX(1.000);transform-origin:2.38px 0">0</span><span style="position:absolute;left:5.86px;top:0;transform:scaleX(1.000);transform-origin:2.38px 0">0</span><span style="position:absolute;left:11.35px;top:0;transform:scaleX(1.000);transform-origin:2.38px 0">0</span><span style="position:absolute;left:16.84px;top:0;transform:scaleX(1.000);transform-origin:2.38px 0">0</span><span style="position:absolute;left:22.33px;top:0;transform:scaleX(1.000);transform-origin:2.38px 0">5</span><span style="position:absolute;left:27.82px;top:0;transform:scaleX(1.000);transform-origin:2.38px 0">5</span><span style="position:absolute;left:32.52px;top:0;transform:scaleX(0.866);transform-origin:3.17px 0">B</span><span style="position:absolute;left:38.01px;top:0;transform:scaleX(0.866);transform-origin:3.17px 0">B</span><span style="position:absolute;left:44.29px;top:0;transform:scaleX(1.000);transform-origin:2.38px 0">0</span><span style="position:absolute;left:49.25px;top:0;transform:scaleX(0.946);transform-origin:2.90px 0">E</span><span style="position:absolute;left:55.27px;top:0;transform:scaleX(1.000);transform-origin:2.38px 0">1</span><span style="position:absolute;left:60.49px;top:0;transform:scaleX(1.000);transform-origin:2.64px 0">F</span><span style="position:absolute;left:66.25px;top:0;transform:scaleX(1.000);transform-origin:2.38px 0">0</span><span style="position:absolute;left:71.74px;top:0;transform:scaleX(1.000);transform-origin:2.38px 0">0</span><span style="position:absolute;left:77.23px;top:0;transform:scaleX(1.000);transform-origin:2.38px 0">7</span><span style="position:absolute;left:82.45px;top:0;transform:scaleX(1.000);transform-origin:2.64px 0">F</span><span style="position:absolute;left:89.27px;top:0;transform:scaleX(1.000);transform-origin:1.32px 0">:</span><span style="position:absolute;left:98.92px;top:0;transform:scaleX(1.000);transform-origin:2.64px 0">S</span><span style="position:absolute;left:102.83px;top:0;transform:scaleX(0.650);transform-origin:4.22px 0">M</span><span style="position:absolute;left:110.44px;top:0;transform:scaleX(1.000);transform-origin:2.11px 0">c</span><span style="position:absolute;left:115.66px;top:0;transform:scaleX(1.000);transform-origin:2.38px 0">_</span><span style="position:absolute;left:119.83px;top:0;transform:scaleX(0.743);transform-origin:3.69px 0">m</span><span style="position:absolute;left:126.91px;top:0;transform:scaleX(1.000);transform-origin:2.11px 0">a</span><span style="position:absolute;left:133.19px;top:0;transform:scaleX(1.000);transform-origin:1.32px 0">t</span><span style="position:absolute;left:137.62px;top:0;transform:scaleX(1.000);transform-origin:2.38px 0">h</span><span style="position:absolute;left:144.17px;top:0;transform:scaleX(1.000);transform-origin:1.32px 0">:</span><span style="position:absolute;left:148.60px;top:0;transform:scaleX(1.000);transform-origin:2.38px 0">0</span><span style="position:absolute;left:154.09px;top:0;transform:scaleX(1.000);transform-origin:2.38px 0">0</span><span style="position:absolute;left:159.58px;top:0;transform:scaleX(1.000);transform-origin:2.38px 0">0</span><span style="position:absolute;left:165.07px;top:0;transform:scaleX(1.000);transform-origin:2.38px 0">0</span><span style="position:absolute;left:170.56px;top:0;transform:scaleX(1.000);transform-origin:2.38px 0">5</span><span style="position:absolute;left:176.05px;top:0;transform:scaleX(1.000);transform-origin:2.38px 0">5</span><span style="position:absolute;left:180.75px;top:0;transform:scaleX(0.866);transform-origin:3.17px 0">B</span><span style="position:absolute;left:186.24px;top:0;transform:scaleX(0.866);transform-origin:3.17px 0">B</span><span style="position:absolute;left:192.52px;top:0;transform:scaleX(1.000);transform-origin:2.38px 0">0</span><span style="position:absolute;left:197.48px;top:0;transform:scaleX(0.946);transform-origin:2.90px 0">E</span><span style="position:absolute;left:203.50px;top:0;transform:scaleX(1.000);transform-origin:2.38px 0">1</span><span style="position:absolute;left:208.72px;top:0;transform:scaleX(1.000);transform-origin:2.64px 0">F</span><span style="position:absolute;left:214.48px;top:0;transform:scaleX(1.000);transform-origin:2.38px 0">0</span><span style="position:absolute;left:219.97px;top:0;transform:scaleX(1.000);transform-origin:2.38px 0">0</span><span style="position:absolute;left:225.46px;top:0;transform:scaleX(1.000);transform-origin:2.38px 0">7</span><span style="position:absolute;left:230.68px;top:0;transform:scaleX(1.000);transform-origin:2.64px 0">F</span></div><div class="a" style="left:281px;top:527px;width:1px;height:11px;background:#d8d8d8;"></div><div class="a" style="left:793px;top:415px;width:487px;height:16.5px;background:transparent;border:1px solid #b4b4b4;border-bottom:0"></div><div class="a" style="left:793px;top:538px;width:487px;height:1px;background:#b8b8b8;"></div><div class="a" style="left:794px;top:416px;width:485px;height:14.5px;background:#f0f0f0;border-bottom:1px solid #bcbcbc"></div><svg style="left:795px;top:418px" width="8" height="8" viewBox="0 0 8 8"><rect x="0.5" y="0.5" width="7" height="7" fill="#e0eeff" stroke="#3a7ad8"/><rect x="1" y="1" width="6" height="1.4" fill="#40a8f0"/><circle cx="4" cy="4.6" r="1.8" fill="none" stroke="#5060d0" stroke-width="0.9"/></svg><div class="t" style="left:807.8px;top:417.73px;font-family:'Liberation Serif',serif;font-size:10px;color:#303030;-webkit-text-stroke:0.22px #303030;"><span style="position:absolute;left:-0.53px;top:0;transform:scaleX(0.809);transform-origin:2.78px 0">S</span><span style="position:absolute;left:5.36px;top:0;transform:scaleX(1.000);transform-origin:1.39px 0">t</span><span style="position:absolute;left:9.03px;top:0;transform:scaleX(1.000);transform-origin:2.22px 0">a</span><span style="position:absolute;left:13.53px;top:0;transform:scaleX(1.000);transform-origin:2.22px 0">c</span><span style="position:absolute;left:17.75px;top:0;transform:scaleX(0.900);transform-origin:2.50px 0">k</span><span style="position:absolute;left:26.75px;top:0;transform:scaleX(0.900);transform-origin:2.50px 0">v</span><span style="position:absolute;left:32.36px;top:0;transform:scaleX(1.000);transform-origin:1.39px 0">i</span><span style="position:absolute;left:36.03px;top:0;transform:scaleX(1.000);transform-origin:2.22px 0">e</span><span style="position:absolute;left:39.14px;top:0;transform:scaleX(0.623);transform-origin:3.61px 0">w</span></div><div class="a" style="left:1239.4px;top:419px;width:7.5px;height:7.5px;background:transparent;border:1px solid #303030;border-top-width:2px"></div><div class="a" style="left:1255.9px;top:421.2px;width:5px;height:5px;background:transparent;border:1px solid #303030"></div><div class="a" style="left:1257.4px;top:419px;width:5px;height:5px;background:transparent;border-top:1.6px solid #303030;border-right:1px solid #303030"></div><svg style="left:1269.4px;top:420px" width="6.5" height="6" viewBox="0 0 6.5 6"><path d="M0.5 0.5L6 5.5M6 0.5L0.5 5.5" stroke="#303030" stroke-width="1.3"/></svg><div class="a" style="left:793px;top:430.6px;width:473.4px;height:95.3px;background:#c8ffff;"></div><div class="a" style="left:794px;top:431.6px;width:472.4px;height:11.2px;background:#5ccdef;"></div><div class="a" style="left:1266.4px;top:430.6px;width:13.6px;height:95.3px;background:#f0f0f0;"></div><div class="a" style="left:1270.3px;top:510.5px;width:5.7px;height:13.2px;background:#888;"></div><div class="t c" style="left:793.6px;top:433.57px;font-size:9.1667px;"><span style="color:#1818f0">00007FFD1AD458D0</span><span style="color:#000">  </span><span style="color:#108c10">00000000002168F0</span><span style="color:#000">  </span></div><div class="t c" style="left:793.6px;top:445.07px;font-size:9.1667px;"><span style="color:#888888">00007FFD1AD458D8</span><span style="color:#000">  </span><span style="color:#108c10">0000001C00000000</span><span style="color:#000">  </span></div><div class="t c" style="left:793.6px;top:456.57px;font-size:9.1667px;"><span style="color:#888888">00007FFD1AD458E0</span><span style="color:#000">  </span><span style="color:#108c10">00000000000003D6</span><span style="color:#000">  </span></div><div class="t c" style="left:793.6px;top:468.07px;font-size:9.1667px;"><span style="color:#888888">00007FFD1AD458E8</span><span style="color:#000">  </span><span style="color:#108c10">FFFFFFFFFFFFF000</span><span style="color:#000">  </span></div><div class="t c" style="left:793.6px;top:479.57px;font-size:9.1667px;"><span style="color:#888888">00007FFD1AD458F0</span><span style="color:#000">  </span><span style="color:#108c10">000055BB0E1ED000</span><span style="color:#000">  </span><span style="color:#1818c8">_init_proc</span></div><div class="t c" style="left:793.6px;top:491.07px;font-size:9.1667px;"><span style="color:#888888">00007FFD1AD458F8</span><span style="color:#000">  </span><span style="color:#108c10">000055BB0E1ED1E9</span><span style="color:#000">  </span><span style="color:#808080">.text:</span><span style="color:#1818c8">encrypt</span></div><div class="t c" style="left:793.6px;top:502.57px;font-size:9.1667px;"><span style="color:#888888">00007FFD1AD45900</span><span style="color:#000">  </span><span style="color:#108c10">3837363534333231</span><span style="color:#000">  </span></div><div class="t c" style="left:793.6px;top:514.07px;font-size:9.1667px;"><span style="color:#888888">00007FFD1AD45908</span><span style="color:#000">  </span><span style="color:#108c10">3635343332313039</span><span style="color:#000">  </span></div><div class="t" style="left:794.7px;top:527.74px;font-family:'Liberation Serif',serif;font-size:9.5px;color:#404040;-webkit-text-stroke:0.22px #404040;-webkit-text-stroke:0.1px #404040"><span style="position:absolute;left:-0.68px;top:0;transform:scaleX(0.802);transform-origin:3.43px 0">U</span><span style="position:absolute;left:4.82px;top:0;transform:scaleX(0.802);transform-origin:3.43px 0">N</span><span style="position:absolute;left:10.32px;top:0;transform:scaleX(0.802);transform-origin:3.43px 0">K</span><span style="position:absolute;left:15.82px;top:0;transform:scaleX(0.802);transform-origin:3.43px 0">N</span><span style="position:absolute;left:21.32px;top:0;transform:scaleX(0.802);transform-origin:3.43px 0">O</span><span style="position:absolute;left:25.77px;top:0;transform:scaleX(0.613);transform-origin:4.48px 0">W</span><span style="position:absolute;left:32.32px;top:0;transform:scaleX(0.802);transform-origin:3.43px 0">N</span></div><div class="a" style="left:833.5px;top:527px;width:1px;height:11px;background:#d8d8d8;"></div><div class="t" style="left:837.2px;top:527.74px;font-family:'Liberation Serif',serif;font-size:9.5px;color:#404040;-webkit-text-stroke:0.22px #404040;-webkit-text-stroke:0.1px #404040"><span style="position:absolute;left:0.37px;top:0;transform:scaleX(1.000);transform-origin:2.38px 0">0</span><span style="position:absolute;left:5.85px;top:0;transform:scaleX(1.000);transform-origin:2.38px 0">0</span><span style="position:absolute;left:11.33px;top:0;transform:scaleX(1.000);transform-origin:2.38px 0">0</span><span style="position:absolute;left:16.80px;top:0;transform:scaleX(1.000);transform-origin:2.38px 0">0</span><span style="position:absolute;left:22.29px;top:0;transform:scaleX(1.000);transform-origin:2.38px 0">7</span><span style="position:absolute;left:27.50px;top:0;transform:scaleX(1.000);transform-origin:2.64px 0">F</span><span style="position:absolute;left:32.98px;top:0;transform:scaleX(1.000);transform-origin:2.64px 0">F</span><span style="position:absolute;left:37.67px;top:0;transform:scaleX(0.799);transform-origin:3.43px 0">D</span><span style="position:absolute;left:44.21px;top:0;transform:scaleX(1.000);transform-origin:2.38px 0">1</span><span style="position:absolute;left:48.63px;top:0;transform:scaleX(0.799);transform-origin:3.43px 0">A</span><span style="position:absolute;left:54.11px;top:0;transform:scaleX(0.799);transform-origin:3.43px 0">D</span><span style="position:absolute;left:60.65px;top:0;transform:scaleX(1.000);transform-origin:2.38px 0">4</span><span style="position:absolute;left:66.12px;top:0;transform:scaleX(1.000);transform-origin:2.38px 0">5</span><span style="position:absolute;left:71.61px;top:0;transform:scaleX(1.000);transform-origin:2.38px 0">8</span><span style="position:absolute;left:76.03px;top:0;transform:scaleX(0.799);transform-origin:3.43px 0">D</span><span style="position:absolute;left:82.56px;top:0;transform:scaleX(1.000);transform-origin:2.38px 0">0</span><span style="position:absolute;left:89.10px;top:0;transform:scaleX(1.000);transform-origin:1.32px 0">:</span><span style="position:absolute;left:99.80px;top:0;transform:scaleX(1.000);transform-origin:1.58px 0">[</span><span style="position:absolute;left:105.01px;top:0;transform:scaleX(1.000);transform-origin:1.85px 0">s</span><span style="position:absolute;left:111.02px;top:0;transform:scaleX(1.000);transform-origin:1.32px 0">t</span><span style="position:absolute;left:115.71px;top:0;transform:scaleX(1.000);transform-origin:2.11px 0">a</span><span style="position:absolute;left:121.19px;top:0;transform:scaleX(1.000);transform-origin:2.11px 0">c</span><span style="position:absolute;left:126.41px;top:0;transform:scaleX(1.000);transform-origin:2.38px 0">k</span><span style="position:absolute;left:132.68px;top:0;transform:scaleX(1.000);transform-origin:1.58px 0">]</span><span style="position:absolute;left:138.42px;top:0;transform:scaleX(1.000);transform-origin:1.32px 0">:</span><span style="position:absolute;left:142.85px;top:0;transform:scaleX(1.000);transform-origin:2.38px 0">0</span><span style="position:absolute;left:148.33px;top:0;transform:scaleX(1.000);transform-origin:2.38px 0">0</span><span style="position:absolute;left:153.81px;top:0;transform:scaleX(1.000);transform-origin:2.38px 0">0</span><span style="position:absolute;left:159.29px;top:0;transform:scaleX(1.000);transform-origin:2.38px 0">0</span><span style="position:absolute;left:164.77px;top:0;transform:scaleX(1.000);transform-origin:2.38px 0">7</span><span style="position:absolute;left:169.98px;top:0;transform:scaleX(1.000);transform-origin:2.64px 0">F</span><span style="position:absolute;left:175.46px;top:0;transform:scaleX(1.000);transform-origin:2.64px 0">F</span><span style="position:absolute;left:180.15px;top:0;transform:scaleX(0.799);transform-origin:3.43px 0">D</span><span style="position:absolute;left:186.69px;top:0;transform:scaleX(1.000);transform-origin:2.38px 0">1</span><span style="position:absolute;left:191.11px;top:0;transform:scaleX(0.799);transform-origin:3.43px 0">A</span><span style="position:absolute;left:196.59px;top:0;transform:scaleX(0.799);transform-origin:3.43px 0">D</span><span style="position:absolute;left:203.13px;top:0;transform:scaleX(1.000);transform-origin:2.38px 0">4</span><span style="position:absolute;left:208.61px;top:0;transform:scaleX(1.000);transform-origin:2.38px 0">5</span><span style="position:absolute;left:214.09px;top:0;transform:scaleX(1.000);transform-origin:2.38px 0">8</span><span style="position:absolute;left:218.51px;top:0;transform:scaleX(0.799);transform-origin:3.43px 0">D</span><span style="position:absolute;left:225.05px;top:0;transform:scaleX(1.000);transform-origin:2.38px 0">0</span></div><div class="a" style="left:1070.5px;top:527px;width:1px;height:11px;background:#d8d8d8;"></div><div class="t" style="left:1074px;top:527.74px;font-family:'Liberation Serif',serif;font-size:9.5px;color:#404040;-webkit-text-stroke:0.22px #404040;-webkit-text-stroke:0.1px #404040"><span style="position:absolute;left:1.06px;top:0;transform:scaleX(1.000);transform-origin:1.58px 0">(</span><span style="position:absolute;left:5.29px;top:0;transform:scaleX(1.000);transform-origin:2.64px 0">S</span><span style="position:absolute;left:10.85px;top:0;transform:scaleX(1.000);transform-origin:2.38px 0">y</span><span style="position:absolute;left:16.14px;top:0;transform:scaleX(1.000);transform-origin:2.38px 0">n</span><span style="position:absolute;left:21.70px;top:0;transform:scaleX(1.000);transform-origin:2.11px 0">c</span><span style="position:absolute;left:26.72px;top:0;transform:scaleX(1.000);transform-origin:2.38px 0">h</span><span style="position:absolute;left:32.80px;top:0;transform:scaleX(1.000);transform-origin:1.58px 0">r</span><span style="position:absolute;left:37.30px;top:0;transform:scaleX(1.000);transform-origin:2.38px 0">o</span><span style="position:absolute;left:42.59px;top:0;transform:scaleX(1.000);transform-origin:2.38px 0">n</span><span style="position:absolute;left:48.94px;top:0;transform:scaleX(1.000);transform-origin:1.32px 0">i</span><span style="position:absolute;left:53.44px;top:0;transform:scaleX(1.000);transform-origin:2.11px 0">z</span><span style="position:absolute;left:58.73px;top:0;transform:scaleX(1.000);transform-origin:2.11px 0">e</span><span style="position:absolute;left:63.75px;top:0;transform:scaleX(1.000);transform-origin:2.38px 0">d</span><span style="position:absolute;left:73.27px;top:0;transform:scaleX(0.771);transform-origin:3.43px 0">w</span><span style="position:absolute;left:80.68px;top:0;transform:scaleX(1.000);transform-origin:1.32px 0">i</span><span style="position:absolute;left:85.97px;top:0;transform:scaleX(1.000);transform-origin:1.32px 0">t</span><span style="position:absolute;left:90.20px;top:0;transform:scaleX(1.000);transform-origin:2.38px 0">h</span><span style="position:absolute;left:99.99px;top:0;transform:scaleX(0.835);transform-origin:3.17px 0">R</span><span style="position:absolute;left:105.80px;top:0;transform:scaleX(1.000);transform-origin:2.64px 0">S</span><span style="position:absolute;left:111.09px;top:0;transform:scaleX(1.000);transform-origin:2.64px 0">P</span><span style="position:absolute;left:117.44px;top:0;transform:scaleX(1.000);transform-origin:1.58px 0">)</span></div><div class="a" style="left:1198px;top:527px;width:1px;height:11px;background:#d8d8d8;"></div><div class="a" style="left:0px;top:541px;width:1280px;height:113px;background:transparent;border:1px solid #b4b4b4"></div><div class="a" style="left:1px;top:542px;width:1278px;height:15px;background:#f0f0f0;border-bottom:1px solid #bcbcbc"></div><svg style="left:2px;top:544px" width="8" height="8" viewBox="0 0 8 8"><rect x="0.5" y="0.5" width="7" height="7" fill="#e8ecf0" stroke="#7a90b0"/><rect x="0.5" y="0.5" width="7" height="1.6" fill="#2a70e0"/><path d="M2 4H6M2 5.5H6" stroke="#8090a8" stroke-width="0.8"/></svg><div class="t" style="left:14px;top:543.73px;font-family:'Liberation Serif',serif;font-size:10px;color:#303030;-webkit-text-stroke:0.22px #303030;"><span style="position:absolute;left:-1.36px;top:0;transform:scaleX(0.623);transform-origin:3.61px 0">O</span><span style="position:absolute;left:4.25px;top:0;transform:scaleX(0.900);transform-origin:2.50px 0">u</span><span style="position:absolute;left:9.86px;top:0;transform:scaleX(1.000);transform-origin:1.39px 0">t</span><span style="position:absolute;left:13.25px;top:0;transform:scaleX(0.900);transform-origin:2.50px 0">p</span><span style="position:absolute;left:17.75px;top:0;transform:scaleX(0.900);transform-origin:2.50px 0">u</span><span style="position:absolute;left:23.36px;top:0;transform:scaleX(1.000);transform-origin:1.39px 0">t</span></div><div class="a" style="left:1239.4px;top:544.5px;width:7.5px;height:7.5px;background:transparent;border:1px solid #303030;border-top-width:2px"></div><div class="a" style="left:1255.9px;top:546.7px;width:5px;height:5px;background:transparent;border:1px solid #303030"></div><div class="a" style="left:1257.4px;top:544.5px;width:5px;height:5px;background:transparent;border-top:1.6px solid #303030;border-right:1px solid #303030"></div><svg style="left:1269.4px;top:545.5px" width="6.5" height="6" viewBox="0 0 6.5 6"><path d="M0.5 0.5L6 5.5M6 0.5L0.5 5.5" stroke="#303030" stroke-width="1.3"/></svg><div class="a" style="left:1px;top:557px;width:1265px;height:96px;background:#ffffff;"></div><div class="a" style="left:1266px;top:557px;width:13px;height:96px;background:#f0f0f0;"></div><div class="a" style="left:1270.6px;top:626px;width:5.4px;height:13.7px;background:#888;"></div><div class="a" style="left:1px;top:557px;width:1265px;height:96px;overflow:hidden"><div class="t c" style="left:2.1px;top:-5.73px;font-size:9.1667px;color:#000000">55BB0E1EC000: process /mnt/d/CTF_tools/IDA_Pro_7.7/dbgsrv/SMc_math has started (pid=983)</div><div class="t c" style="left:2.1px;top:5.77px;font-size:9.1667px;color:#000000">7FAA8FFE4000: loaded /usr/lib/x86_64-linux-gnu/libc.so.6</div><div class="t c" style="left:2.1px;top:17.27px;font-size:9.1667px;color:#000000">Debugger: process has exited (exit code 0)</div><div class="t c" style="left:2.1px;top:28.77px;font-size:9.1667px;color:#000000">Found a valid interpeter in /usr/lib/x86_64-linux-gnu/ld-linux-x86-64.so.2, will report shared library events!</div><div class="t c" style="left:2.1px;top:40.27px;font-size:9.1667px;color:#000000">7FFD1ADA8000: loaded [vdso]</div><div class="t c" style="left:2.1px;top:51.77px;font-size:9.1667px;color:#000000">7F6553687000: loaded /usr/lib/x86_64-linux-gnu/ld-linux-x86-64.so.2</div><div class="t c" style="left:2.1px;top:63.27px;font-size:9.1667px;color:#000000">Rebasing program to 0x000055BB0E1EC000...</div><div class="t c" style="left:2.1px;top:74.77px;font-size:9.1667px;color:#000000">55BB0E1EC000: process /mnt/d/CTF_tools/IDA_Pro_7.7/dbgsrv/SMc_math has started (pid=983)</div><div class="t c" style="left:2.1px;top:86.27px;font-size:9.1667px;color:#000000">7F6553457000: loaded /usr/lib/x86_64-linux-gnu/libc.so.6</div></div><div class="a" style="left:0px;top:654px;width:1280px;height:15.5px;background:#f0f0f0;"></div><div class="a" style="left:2px;top:655.2px;width:33.5px;height:14.6px;background:#fafafa;border:1px solid #e4e4e4;border-radius:2px"></div><div class="a" style="left:38.5px;top:655.5px;width:1241.5px;height:14.5px;background:#ffffff;border-bottom:1px solid #b8b8b8"></div><div class="t" style="left:4.7px;top:657.42px;font-family:'Liberation Serif',serif;font-size:10px;color:#505050;-webkit-text-stroke:0.22px #505050;-webkit-text-stroke:0.1px #505050"><span style="position:absolute;left:-0.56px;top:0;transform:scaleX(0.800);transform-origin:2.78px 0">P</span><span style="position:absolute;left:4.18px;top:0;transform:scaleX(0.890);transform-origin:2.50px 0">y</span><span style="position:absolute;left:9.74px;top:0;transform:scaleX(1.000);transform-origin:1.39px 0">t</span><span style="position:absolute;left:13.08px;top:0;transform:scaleX(0.890);transform-origin:2.50px 0">h</span><span style="position:absolute;left:17.53px;top:0;transform:scaleX(0.890);transform-origin:2.50px 0">o</span><span style="position:absolute;left:21.98px;top:0;transform:scaleX(0.890);transform-origin:2.50px 0">n</span></div><div class="a" style="left:0px;top:670px;width:1280px;height:14px;background:#f0f0f0;"></div><div class="t" style="left:1px;top:673.04px;font-family:'Liberation Serif',serif;font-size:9.5px;color:#404040;-webkit-text-stroke:0.22px #404040;-webkit-text-stroke:0.1px #404040"><span style="position:absolute;left:-0.73px;top:0;transform:scaleX(0.787);transform-origin:3.43px 0">A</span><span style="position:absolute;left:4.67px;top:0;transform:scaleX(0.787);transform-origin:3.43px 0">U</span><span style="position:absolute;left:12.18px;top:0;transform:scaleX(1.000);transform-origin:1.32px 0">:</span><span style="position:absolute;left:28.38px;top:0;transform:scaleX(1.000);transform-origin:1.32px 0">i</span><span style="position:absolute;left:32.73px;top:0;transform:scaleX(1.000);transform-origin:2.38px 0">d</span><span style="position:absolute;left:39.18px;top:0;transform:scaleX(1.000);transform-origin:1.32px 0">l</span><span style="position:absolute;left:43.79px;top:0;transform:scaleX(1.000);transform-origin:2.11px 0">e</span></div><div class="a" style="left:61px;top:671px;width:1px;height:11px;background:#d8d8d8;"></div><div class="t" style="left:64.7px;top:673.04px;font-family:'Liberation Serif',serif;font-size:9.5px;color:#404040;-webkit-text-stroke:0.22px #404040;-webkit-text-stroke:0.1px #404040"><span style="position:absolute;left:-0.73px;top:0;transform:scaleX(0.787);transform-origin:3.43px 0">D</span><span style="position:absolute;left:5.73px;top:0;transform:scaleX(1.000);transform-origin:2.38px 0">o</span><span style="position:absolute;left:10.07px;top:0;transform:scaleX(0.787);transform-origin:3.43px 0">w</span><span style="position:absolute;left:16.53px;top:0;transform:scaleX(1.000);transform-origin:2.38px 0">n</span></div><div class="a" style="left:100px;top:671px;width:1px;height:11px;background:#d8d8d8;"></div><div class="t" style="left:103px;top:673.04px;font-family:'Liberation Serif',serif;font-size:9.5px;color:#404040;-webkit-text-stroke:0.22px #404040;-webkit-text-stroke:0.1px #404040"><span style="position:absolute;left:-0.73px;top:0;transform:scaleX(0.787);transform-origin:3.43px 0">D</span><span style="position:absolute;left:6.78px;top:0;transform:scaleX(1.000);transform-origin:1.32px 0">i</span><span style="position:absolute;left:11.65px;top:0;transform:scaleX(1.000);transform-origin:1.85px 0">s</span><span style="position:absolute;left:16.53px;top:0;transform:scaleX(1.000);transform-origin:2.38px 0">k</span><span style="position:absolute;left:22.98px;top:0;transform:scaleX(1.000);transform-origin:1.32px 0">:</span><span style="position:absolute;left:32.73px;top:0;transform:scaleX(1.000);transform-origin:2.38px 0">3</span><span style="position:absolute;left:38.13px;top:0;transform:scaleX(1.000);transform-origin:2.38px 0">4</span><span style="position:absolute;left:43.53px;top:0;transform:scaleX(1.000);transform-origin:2.38px 0">1</span><span style="position:absolute;left:47.87px;top:0;transform:scaleX(0.787);transform-origin:3.43px 0">G</span><span style="position:absolute;left:53.53px;top:0;transform:scaleX(0.852);transform-origin:3.17px 0">B</span></div></body></html>
